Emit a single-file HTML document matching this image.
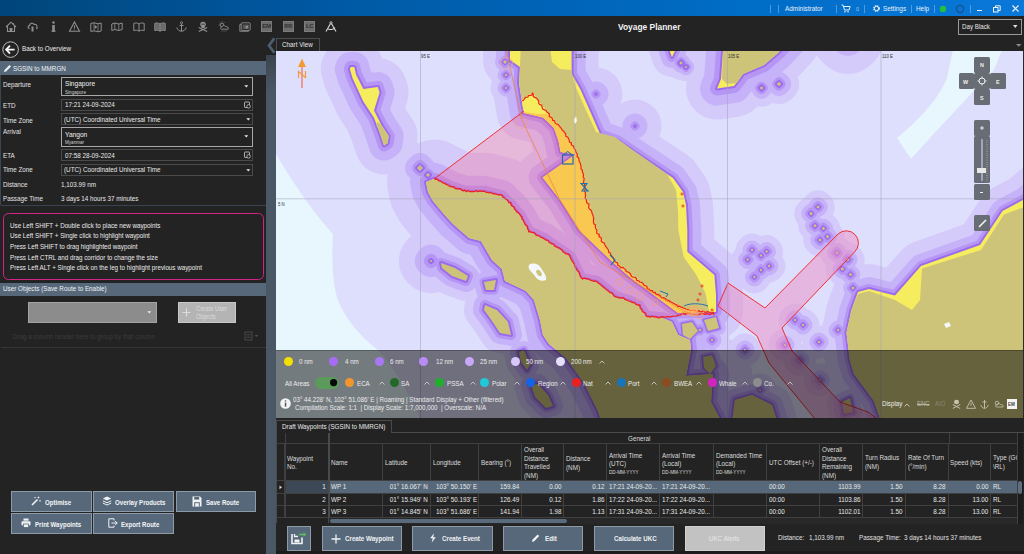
<!DOCTYPE html>
<html><head><meta charset="utf-8"><style>*{box-sizing:border-box;margin:0;padding:0}
html,body{width:1024px;height:554px;overflow:hidden;background:#232323;font-family:"Liberation Sans",sans-serif;color:#e8e8e8}
.a{position:absolute}
.t{position:absolute;white-space:nowrap;line-height:1;color:#e6e6e6}
svg{position:absolute;overflow:visible}
</style></head><body>
<div class="a" style="left:0px;top:0px;width:1024px;height:16px;background:linear-gradient(90deg,#00467a 0%,#00559c 25%,#0062b4 50%,#006ec8 75%,#0a78d8 100%);"></div>
<div class="a" style="left:770px;top:5px;width:1px;height:8px;background:rgba(140,190,240,0.55);"></div>
<div class="a" style="left:778px;top:5px;width:1px;height:8px;background:rgba(140,190,240,0.55);"></div>
<div class="a" style="left:836px;top:5px;width:1px;height:8px;background:rgba(140,190,240,0.55);"></div>
<div class="a" style="left:864px;top:5px;width:1px;height:8px;background:rgba(140,190,240,0.55);"></div>
<div class="a" style="left:911px;top:5px;width:1px;height:8px;background:rgba(140,190,240,0.55);"></div>
<div class="a" style="left:934px;top:5px;width:1px;height:8px;background:rgba(140,190,240,0.55);"></div>
<div class="a" style="left:970px;top:5px;width:1px;height:8px;background:rgba(140,190,240,0.55);"></div>
<div class="t" style="left:784.5px;top:4.94px;font-size:7.04px;transform:scaleX(0.91);transform-origin:0 0;color:#e8f0fa;">Administrator</div>
<svg style="left:841px;top:4px" width="10" height="9" viewBox="0 0 10 9"><path d="M0.5 1h1.5l1.5 5h4.5l1.2-3.5H2.6" fill="none" stroke="#e8f0fa" stroke-width="1"/><circle cx="4" cy="7.8" r="0.8" fill="#e8f0fa"/><circle cx="7" cy="7.8" r="0.8" fill="#e8f0fa"/></svg>
<div class="t" style="left:856.0px;top:5.78px;font-size:6.05px;transform:scaleX(0.91);transform-origin:0 0;color:#a8c8ea;">0</div>
<svg style="left:872px;top:4px" width="9" height="9" viewBox="0 0 9 9"><circle cx="4.5" cy="4.5" r="2.6" fill="none" stroke="#e8f0fa" stroke-width="1.6" stroke-dasharray="1.2 0.9"/><circle cx="4.5" cy="4.5" r="2.2" fill="none" stroke="#e8f0fa" stroke-width="1"/></svg>
<div class="t" style="left:883.0px;top:4.94px;font-size:7.04px;transform:scaleX(0.91);transform-origin:0 0;color:#e8f0fa;">Settings</div>
<div class="t" style="left:915.8px;top:4.94px;font-size:7.04px;transform:scaleX(0.91);transform-origin:0 0;color:#e8f0fa;">Help</div>
<svg style="left:939px;top:4.5px" width="8" height="8"><circle cx="4" cy="4" r="3.2" fill="#22c040"/></svg>
<svg style="left:955px;top:4px" width="10" height="10"><circle cx="5" cy="5" r="3.6" fill="none" stroke="#1a4f8c" stroke-width="1.2"/></svg>
<div class="a" style="left:977px;top:10px;width:5px;height:1.2px;background:#f0f4fa;"></div>
<svg style="left:993px;top:5px" width="8" height="8" viewBox="0 0 8 8"><rect x="0.5" y="2.5" width="4.5" height="4.5" fill="none" stroke="#f0f4fa" stroke-width="1"/><path d="M2.5 2.5V0.8h4.7v4.7H5" fill="none" stroke="#f0f4fa" stroke-width="1"/></svg>
<svg style="left:1012px;top:5px" width="7" height="7" viewBox="0 0 7 7"><path d="M0.5 0.5L6.5 6.5M6.5 0.5L0.5 6.5" stroke="#f0f4fa" stroke-width="1.2"/></svg>
<div class="t" style="left:617.8px;top:23.37px;font-size:9.24px;transform:scaleX(0.91);transform-origin:0 0;color:#f2f2f2;font-weight:bold;">Voyage Planner</div>
<div class="a" style="left:958px;top:18.5px;width:64px;height:16.5px;border:1px solid #9a9a9a;background:#232323"></div>
<div class="t" style="left:962.0px;top:24.12px;font-size:6.82px;transform:scaleX(0.91);transform-origin:0 0;color:#e8e8e8;">Day Black</div>
<svg style="left:1013px;top:25px" width="5" height="4"><path d="M0 0h4.5L2.25 3z" fill="#e0e0e0"/></svg>
<svg style="left:1015.5px;top:43.5px" width="6" height="4"><path d="M0 0h5.5L2.75 2.8z" fill="#8a8a8a"/></svg>
<svg style="left:5px;top:21px" width="12" height="11" viewBox="0 0 12 11"><path d="M1 6L6 1.2L11 6M2.5 4.8V10.5h7V4.8" fill="none" stroke="#8f8f8f" stroke-width="1.1"/><rect x="4.6" y="7" width="2.8" height="3.5" fill="#8f8f8f"/><path d="M8.5 2.2v1.6" stroke="#8f8f8f" stroke-width="1"/></svg>
<svg style="left:27px;top:22px" width="11" height="10" viewBox="0 0 11 10"><path d="M2.6 6.6C0.6 6.6 0.6 3.6 2.6 3.6C2.8 1.2 5.8 0.4 7 2.4C9 1.8 10.4 3.4 9.8 5C10.8 5.6 10.2 6.6 9.2 6.6" fill="none" stroke="#8f8f8f" stroke-width="1.1"/><path d="M5.5 9.5V4.5" stroke="#8f8f8f" stroke-width="2"/></svg>
<svg style="left:51px;top:21px" width="5" height="11" viewBox="0 0 5 11"><circle cx="2.5" cy="1.5" r="1.2" fill="#8f8f8f"/><rect x="1.2" y="4" width="2.6" height="6.5" fill="#8f8f8f"/><rect x="0.5" y="9.6" width="4" height="1.2" fill="#8f8f8f"/></svg>
<svg style="left:69px;top:21px" width="11" height="11" viewBox="0 0 11 11"><path d="M5.5 1L10.5 10.2H0.5Z" fill="none" stroke="#8f8f8f" stroke-width="1.1"/><path d="M5.5 4.5v3" stroke="#8f8f8f" stroke-width="1"/><circle cx="5.5" cy="8.8" r="0.5" fill="#8f8f8f"/></svg>
<svg style="left:90px;top:22px" width="12" height="10" viewBox="0 0 12 10"><path d="M0.8 1.5L4 0.8L8 1.8L11.2 1V9L8 9.8L4 8.8L0.8 9.5Z" fill="none" stroke="#8f8f8f" stroke-width="1"/><path d="M4 0.8V8.8M8 1.8V9.8" stroke="#8f8f8f" stroke-width="0.7"/><path d="M4.6 3L7.4 5L4.6 7Z" fill="#8f8f8f"/></svg>
<svg style="left:111px;top:22px" width="12" height="9" viewBox="0 0 12 9"><path d="M0.8 2L3.8 1L7.8 2L11.2 1V7.5L7.8 8.5L3.8 7.5L0.8 8.5Z" fill="none" stroke="#8f8f8f" stroke-width="1"/><path d="M3.8 1V7.5M7.8 2V8.5" stroke="#8f8f8f" stroke-width="0.8"/></svg>
<svg style="left:133px;top:22px" width="12" height="10" viewBox="0 0 12 10"><path d="M6 2C4.5 0.8 2.5 0.8 0.8 1.4V8.6C2.5 8 4.5 8 6 9.2C7.5 8 9.5 8 11.2 8.6V1.4C9.5 0.8 7.5 0.8 6 2ZM6 2V9.2" fill="none" stroke="#8f8f8f" stroke-width="1"/></svg>
<svg style="left:154px;top:22px" width="12" height="10" viewBox="0 0 12 10"><path d="M6 2C4.5 0.8 2.5 0.8 0.8 1.4V8.6C2.5 8 4.5 8 6 9.2C7.5 8 9.5 8 11.2 8.6V1.4C9.5 0.8 7.5 0.8 6 2ZM6 2V9.2" fill="#5a5a5a" stroke="#8f8f8f" stroke-width="1"/><path d="M2 3.2h3M2 5h3M2 6.8h3M7 3.2h3M7 5h3M7 6.8h3" stroke="#8f8f8f" stroke-width="0.6"/></svg>
<svg style="left:176px;top:21px" width="11" height="11" viewBox="0 0 11 11"><circle cx="5.5" cy="1.8" r="1.1" fill="none" stroke="#8f8f8f" stroke-width="0.9"/><path d="M5.5 3V10.2M3.5 4.5H7.5M0.8 6.5C1.5 9 3.5 10.2 5.5 10.2C7.5 10.2 9.5 9 10.2 6.5" fill="none" stroke="#8f8f8f" stroke-width="1"/></svg>
<svg style="left:198px;top:21px" width="10" height="11" viewBox="0 0 10 11"><ellipse cx="5" cy="3.3" rx="2.8" ry="2.6" fill="#8f8f8f"/><rect x="3.4" y="5" width="3.2" height="2" fill="#8f8f8f"/><circle cx="4" cy="3.2" r="0.7" fill="#2a2a2a"/><circle cx="6" cy="3.2" r="0.7" fill="#2a2a2a"/><path d="M0.8 6.5L9.2 10.5M9.2 6.5L0.8 10.5" stroke="#8f8f8f" stroke-width="1.1"/></svg>
<svg style="left:218px;top:21px" width="12" height="11" viewBox="0 0 12 11"><circle cx="4" cy="4" r="1.8" fill="none" stroke="#8f8f8f" stroke-width="0.9"/><path d="M4 0.4v1M0.6 4h1M1.6 1.6l0.7 0.7M6.4 1.6l-0.7 0.7" stroke="#8f8f8f" stroke-width="0.8"/><path d="M3.5 8.2C2.2 8.2 2.2 6.2 3.6 6.2C4 4.2 7 4 7.6 5.6C9.4 5.2 10.8 6.4 10.2 8.2Z" fill="#232323" stroke="#8f8f8f" stroke-width="0.9"/><path d="M4 9.5v1M6 9.5v1M8 9.5v1" stroke="#8f8f8f" stroke-width="0.7"/></svg>
<svg style="left:239px;top:22px" width="12" height="10" viewBox="0 0 12 10"><rect x="2.2" y="0.8" width="9" height="7.6" rx="0.8" fill="none" stroke="#8f8f8f" stroke-width="0.9"/><path d="M2.2 2.5H0.8V9.3H9.5V8.4" fill="none" stroke="#8f8f8f" stroke-width="0.9"/><rect x="3.6" y="2.4" width="6.2" height="4.6" fill="#555"/><rect x="6.6" y="3.8" width="2.6" height="2.6" fill="#8f8f8f"/></svg>
<div class="a" style="left:261px;top:21px;width:11px;height:11px;background:#6c6c6c;border:0.5px solid #7c7c7c"></div>
<div class="t" style="left:261px;top:23.2px;width:11px;text-align:center;font-size:6.2px;font-weight:bold;color:#303030;letter-spacing:-0.5px">EM</div>
<div class="a" style="left:282.6px;top:21px;width:11px;height:11px;background:#6c6c6c;border:0.5px solid #7c7c7c"></div>
<div class="t" style="left:282.6px;top:24px;width:11px;text-align:center;font-size:5px;font-weight:bold;color:#303030;letter-spacing:-0.5px">R45</div>
<div class="a" style="left:304px;top:21px;width:11px;height:11px;background:#6c6c6c;border:0.5px solid #7c7c7c"></div>
<div class="t" style="left:304px;top:23.2px;width:11px;text-align:center;font-size:6.2px;font-weight:bold;color:#303030;letter-spacing:-0.5px">LC</div>
<svg style="left:325px;top:21px" width="12" height="11" viewBox="0 0 12 11"><circle cx="6" cy="1.8" r="1.1" fill="none" stroke="#d8d8d8" stroke-width="0.9"/><path d="M5.4 2.8L1 10.6M6.6 2.8L11 10.6M2.2 7.6C4.5 9 8 8.8 10 6.6" fill="none" stroke="#d8d8d8" stroke-width="1.1"/></svg>
<svg style="left:2px;top:41px" width="18" height="18" viewBox="0 0 18 18"><circle cx="8.6" cy="8.6" r="7.8" fill="none" stroke="#cfcfcf" stroke-width="0.9"/><path d="M4.4 8.6H12.6M8 4.6L4.2 8.6L8 12.6" fill="none" stroke="#f4f4f4" stroke-width="1.9"/></svg>
<div class="t" style="left:21.5px;top:45.93px;font-size:6.93px;transform:scaleX(0.91);transform-origin:0 0;color:#ececec;">Back to Overview</div>
<div class="a" style="left:0px;top:61px;width:267px;height:14px;background:#56687a;"></div>
<svg style="left:3px;top:64px" width="9" height="9" viewBox="0 0 9 9"><path d="M1 8L1.5 6L6.5 1L8 2.5L3 7.5Z" fill="#eef2f6"/></svg>
<div class="t" style="left:13.0px;top:65.83px;font-size:6.93px;transform:scaleX(0.91);transform-origin:0 0;color:#eef2f6;">SGSIN to MMRGN</div>
<div class="a" style="left:0px;top:75px;width:1.2px;height:130px;background:#3c4650;"></div>
<div class="t" style="left:3.0px;top:81.63px;font-size:6.93px;transform:scaleX(0.91);transform-origin:0 0;color:#e4e4e4;">Departure</div>
<div class="t" style="left:3.0px;top:102.63px;font-size:6.93px;transform:scaleX(0.91);transform-origin:0 0;color:#e4e4e4;">ETD</div>
<div class="t" style="left:3.0px;top:117.63px;font-size:6.93px;transform:scaleX(0.91);transform-origin:0 0;color:#e4e4e4;">Time Zone</div>
<div class="t" style="left:3.0px;top:128.63px;font-size:6.93px;transform:scaleX(0.91);transform-origin:0 0;color:#e4e4e4;">Arrival</div>
<div class="t" style="left:3.0px;top:152.63px;font-size:6.93px;transform:scaleX(0.91);transform-origin:0 0;color:#e4e4e4;">ETA</div>
<div class="t" style="left:3.0px;top:167.43px;font-size:6.93px;transform:scaleX(0.91);transform-origin:0 0;color:#e4e4e4;">Time Zone</div>
<div class="t" style="left:3.0px;top:181.63px;font-size:6.93px;transform:scaleX(0.91);transform-origin:0 0;color:#e4e4e4;">Distance</div>
<div class="t" style="left:3.0px;top:195.63px;font-size:6.93px;transform:scaleX(0.91);transform-origin:0 0;color:#e4e4e4;">Passage Time</div>
<div class="a" style="left:61px;top:77px;width:192px;height:19px;border:1px solid #a8a8a8;background:#232323"></div>
<div class="t" style="left:65.0px;top:80.35px;font-size:7.26px;transform:scaleX(0.91);transform-origin:0 0;color:#f0f0f0;">Singapore</div>
<div class="t" style="left:65.0px;top:90.01px;font-size:5.06px;transform:scaleX(0.91);transform-origin:0 0;color:#d0d0d0;">Singapore</div>
<svg style="left:244px;top:85px" width="5" height="3"><path d="M0.3 0.3h4L2.3 2.6z" fill="#e8e8e8"/></svg>
<div class="a" style="left:61px;top:98.5px;width:192px;height:12px;border:1px solid #4a4a4a;background:#232323"></div>
<div class="t" style="left:64.5px;top:101.63px;font-size:6.93px;transform:scaleX(0.91);transform-origin:0 0;color:#e8e8e8;">17:21 24-09-2024</div>
<svg style="left:244px;top:100.5px" width="7" height="8" viewBox="0 0 7 8"><rect x="0.5" y="1" width="5" height="5.5" rx="0.6" fill="none" stroke="#cfcfcf" stroke-width="0.8"/><circle cx="4.6" cy="5.4" r="1.8" fill="#232323" stroke="#cfcfcf" stroke-width="0.7"/></svg>
<div class="a" style="left:61px;top:112.5px;width:192px;height:12.5px;border:1px solid #4a4a4a;background:#232323"></div>
<div class="t" style="left:63.5px;top:116.63px;font-size:6.93px;transform:scaleX(0.91);transform-origin:0 0;color:#e8e8e8;">(UTC) Coordinated Universal Time</div>
<svg style="left:245.5px;top:117.5px" width="5" height="3"><path d="M0.3 0.3h4L2.3 2.6z" fill="#e8e8e8"/></svg>
<div class="a" style="left:61px;top:127px;width:192px;height:19.5px;border:1px solid #a8a8a8;background:#232323"></div>
<div class="t" style="left:65.0px;top:130.85px;font-size:7.26px;transform:scaleX(0.91);transform-origin:0 0;color:#f0f0f0;">Yangon</div>
<div class="t" style="left:65.0px;top:140.01px;font-size:5.06px;transform:scaleX(0.91);transform-origin:0 0;color:#d0d0d0;">Myanmar</div>
<svg style="left:244px;top:135px" width="5" height="3"><path d="M0.3 0.3h4L2.3 2.6z" fill="#e8e8e8"/></svg>
<div class="a" style="left:61px;top:149px;width:192px;height:12px;border:1px solid #4a4a4a;background:#232323"></div>
<div class="t" style="left:64.5px;top:152.63px;font-size:6.93px;transform:scaleX(0.91);transform-origin:0 0;color:#e8e8e8;">07:58 28-09-2024</div>
<svg style="left:244px;top:151px" width="7" height="8" viewBox="0 0 7 8"><rect x="0.5" y="1" width="5" height="5.5" rx="0.6" fill="none" stroke="#cfcfcf" stroke-width="0.8"/><circle cx="4.6" cy="5.4" r="1.8" fill="#232323" stroke="#cfcfcf" stroke-width="0.7"/></svg>
<div class="a" style="left:61px;top:163.5px;width:192px;height:12.5px;border:1px solid #4a4a4a;background:#232323"></div>
<div class="t" style="left:63.5px;top:167.43px;font-size:6.93px;transform:scaleX(0.91);transform-origin:0 0;color:#e8e8e8;">(UTC) Coordinated Universal Time</div>
<svg style="left:245.5px;top:168.5px" width="5" height="3"><path d="M0.3 0.3h4L2.3 2.6z" fill="#e8e8e8"/></svg>
<div class="t" style="left:61.0px;top:181.63px;font-size:6.93px;transform:scaleX(0.91);transform-origin:0 0;color:#e8e8e8;">1,103.99 nm</div>
<div class="t" style="left:60.6px;top:195.63px;font-size:6.93px;transform:scaleX(0.91);transform-origin:0 0;color:#e8e8e8;">3 days 14 hours 37 minutes</div>
<div class="a" style="left:1px;top:204.8px;width:266px;height:1.2px;background:#3a4450;"></div>
<div class="a" style="left:3px;top:213px;width:261px;height:66.5px;border:1.3px solid #d02488;border-radius:5.5px"></div>
<div class="t" style="left:10.0px;top:222.77px;font-size:6.88px;transform:scaleX(0.91);transform-origin:0 0;color:#ececec;">Use Left SHIFT + Double click to place new waypoints</div>
<div class="t" style="left:10.0px;top:233.42px;font-size:6.88px;transform:scaleX(0.91);transform-origin:0 0;color:#ececec;">Use Left SHIFT + Single click to highlight waypoint</div>
<div class="t" style="left:10.0px;top:244.07px;font-size:6.88px;transform:scaleX(0.91);transform-origin:0 0;color:#ececec;">Press Left SHIFT to drag highlighted waypoint</div>
<div class="t" style="left:10.0px;top:254.72px;font-size:6.88px;transform:scaleX(0.91);transform-origin:0 0;color:#ececec;">Press Left CTRL and drag corridor to change the size</div>
<div class="t" style="left:10.0px;top:265.37px;font-size:6.88px;transform:scaleX(0.91);transform-origin:0 0;color:#ececec;">Press Left ALT + Single click on the leg to highlight previous waypoint</div>
<div class="a" style="left:0px;top:282.5px;width:267px;height:13px;background:#56687a;"></div>
<div class="t" style="left:3.0px;top:286.23px;font-size:6.93px;transform:scaleX(0.91);transform-origin:0 0;color:#eef2f6;">User Objects (Save Route to Enable)</div>
<div class="a" style="left:28px;top:302px;width:128.5px;height:21px;background:#8c8c8c;border:1px solid #a4a4a4"></div>
<svg style="left:147px;top:311px" width="5" height="3"><path d="M0.3 0.3h4L2.3 2.6z" fill="#eaeaea"/></svg>
<div class="a" style="left:177.5px;top:302px;width:58.5px;height:21px;background:#b4b4b4;border:1px solid #c8c8c8"></div>
<svg style="left:182px;top:307.5px" width="9" height="9"><path d="M4.5 0.5V8.5M0.5 4.5H8.5" stroke="#dcdcdc" stroke-width="1.1"/></svg>
<div class="t" style="left:196.0px;top:305.60px;font-size:6.38px;transform:scaleX(0.91);transform-origin:0 0;color:#dadada;">Create User</div>
<div class="t" style="left:196.0px;top:313.50px;font-size:6.38px;transform:scaleX(0.91);transform-origin:0 0;color:#dadada;">Objects</div>
<div class="t" style="left:13.0px;top:334.32px;font-size:6.82px;transform:scaleX(0.91);transform-origin:0 0;color:#3c3c3c;">Drag a column header here to group by that column</div>
<svg style="left:244px;top:331px" width="16" height="10"><rect x="1" y="1" width="7" height="8" fill="none" stroke="#4e4e4e" stroke-width="0.9"/><path d="M2.5 3.5h4M2.5 5h4M2.5 6.5h4" stroke="#4e4e4e" stroke-width="0.6"/><path d="M10.5 4h4L12.5 6z" fill="#4e4e4e"/></svg>
<div class="a" style="left:1px;top:347px;width:266px;height:0.8px;background:#363636;"></div>
<div class="a" style="left:11px;top:491px;width:80.5px;height:21px;background:#57687a;border:1px solid #8d9aa8"></div>
<svg style="left:31px;top:496px" width="10" height="10" viewBox="0 0 10 10"><path d="M1 9L6.5 3.5" stroke="#f0f2f4" stroke-width="1.6"/><path d="M7.5 0.5v2M6.5 1.5h2M9 4v1.6M8.2 4.8h1.6M4 1v1.2M3.4 1.6h1.2" stroke="#f0f2f4" stroke-width="0.7"/></svg>
<div class="t" style="left:44.5px;top:500.02px;font-size:6.71px;transform:scaleX(0.91);transform-origin:0 0;color:#f4f6f8;font-weight:bold;">Optimise</div>
<div class="a" style="left:93px;top:491px;width:80.5px;height:21px;background:#57687a;border:1px solid #8d9aa8"></div>
<svg style="left:102px;top:496px" width="10" height="10" viewBox="0 0 10 10"><path d="M5 0.6L9.2 2.6L5 4.6L0.8 2.6Z" fill="#f0f2f4"/><path d="M0.8 4.8L5 6.8L9.2 4.8M0.8 7L5 9L9.2 7" fill="none" stroke="#f0f2f4" stroke-width="1"/></svg>
<div class="t" style="left:115.0px;top:500.02px;font-size:6.71px;transform:scaleX(0.91);transform-origin:0 0;color:#f4f6f8;font-weight:bold;">Overlay Products</div>
<div class="a" style="left:175.5px;top:491px;width:80.5px;height:21px;background:#57687a;border:1px solid #8d9aa8"></div>
<svg style="left:192px;top:495.5px" width="10" height="11" viewBox="0 0 10 11"><path d="M0.5 0.5H8L9.5 2V10.5H0.5Z" fill="#f0f2f4"/><rect x="2.2" y="1" width="5" height="2.6" fill="#57687a"/><rect x="2.2" y="6.2" width="5.6" height="4.3" fill="#57687a"/><rect x="3.2" y="7.2" width="3.6" height="3.3" fill="#f0f2f4"/></svg>
<div class="t" style="left:205.5px;top:500.02px;font-size:6.71px;transform:scaleX(0.91);transform-origin:0 0;color:#f4f6f8;font-weight:bold;">Save Route</div>
<div class="a" style="left:11px;top:513px;width:80.5px;height:20.5px;background:#57687a;border:1px solid #8d9aa8"></div>
<svg style="left:21px;top:518px" width="10" height="10" viewBox="0 0 10 10"><rect x="2.5" y="0.5" width="5" height="2.2" fill="#f0f2f4"/><rect x="0.5" y="3.2" width="9" height="4.2" rx="0.8" fill="#f0f2f4"/><rect x="2.5" y="6" width="5" height="3.5" fill="#f0f2f4" stroke="#57687a" stroke-width="0.8"/></svg>
<div class="t" style="left:34.5px;top:522.02px;font-size:6.71px;transform:scaleX(0.91);transform-origin:0 0;color:#f4f6f8;font-weight:bold;">Print Waypoints</div>
<div class="a" style="left:93px;top:513px;width:80.5px;height:20.5px;background:#57687a;border:1px solid #8d9aa8"></div>
<svg style="left:108px;top:518px" width="10" height="10" viewBox="0 0 10 10"><path d="M6 2.5V0.8H0.8V9.2H6V7.5" fill="none" stroke="#f0f2f4" stroke-width="1"/><path d="M3.5 5H9.2M7.2 3L9.2 5L7.2 7" fill="none" stroke="#f0f2f4" stroke-width="1"/></svg>
<div class="t" style="left:120.8px;top:522.02px;font-size:6.71px;transform:scaleX(0.91);transform-origin:0 0;color:#f4f6f8;font-weight:bold;">Export Route</div>
<div class="a" style="left:266px;top:54.5px;width:9.5px;height:500px;background:linear-gradient(180deg,#3a434d 0px,#46525e 25px,#4a5866 40px,#4a5866 100%);"></div>
<svg style="left:266.5px;top:37px" width="9" height="17" viewBox="0 0 9 17"><path d="M7.3 1.2L2 8.5L7.3 15.8" fill="none" stroke="#4a5e70" stroke-width="2.8"/></svg>
<div class="a" style="left:276px;top:38px;width:43.5px;height:13px;border:1px solid #4c4c4c;border-bottom:none;background:#232323"></div>
<div class="t" style="left:282.0px;top:42.23px;font-size:6.93px;transform:scaleX(0.91);transform-origin:0 0;color:#e8e8e8;">Chart View</div>
<svg style="left:276px;top:51px" width="747" height="367" viewBox="276 51 747 367"><defs><clipPath id="mc"><rect x="276" y="51" width="747" height="367"/></clipPath></defs><g clip-path="url(#mc)">
<rect x="270" y="45" width="760" height="380" fill="#dedffd"/>
<path d="M270 150 L276 154 C300 195 322 222 333 234 C331 262 333 290 340 305 C348 322 362 338 378 350 C395 368 410 395 423 425 L270 425Z" fill="#e8f6fe"/>
<path d="M954 45 L947 78 C940 95 925 115 897 138 L911 159 C935 132 965 100 994 70 L1004 45Z" fill="#e8f6fe"/>
<path d="M350.7 67 L354.3 67 L356 74.5 L363.3 89 L377.8 87 L379.6 92.5 L374 110.6 L381.4 125 L388.6 136 L387.7 143 L384 145.5 L379.6 132.2 L374 117.8 L363.3 101.5 L352.5 78 L349.8 69Z" fill="#d4cbfa" stroke="#d4cbfa" stroke-width="58" stroke-linejoin="round"/>
<path d="M519 40 L574 40 L571.6 51 L571.6 74 L580 88.5 L589 108.8 L600.4 134.8 L617.8 141 L634 152 L655 166 L673 178 L683 192 L686 205 L687.3 230 L687.3 251.7 L714.4 275 L716 295 L716 312 L678 313 L629.6 277 L613 262.5 L579 230 L561 201 L542.6 177.6 L575.8 154.3 L560.6 152 L558.5 141 L554 128 L543 117.5 L523.8 113 L521.7 100 L519 83 L520 67 L510 60 L510 40Z" fill="#d4cbfa" stroke="#d4cbfa" stroke-width="54" stroke-linejoin="round"/>
<path d="M434.3 178.7 L451.7 187.3 L464.7 191.7 L484 191.7 L501.5 196 L511 205 L520 216 L528.7 231.8 L544.8 239.3 L560 250 L570 257 L581 278.7 L597 282 L615 296.8 L629.6 301.3 L638.6 305.8 L645.8 316.6 L663.9 318.5 L672 322 L678 335 L690 340 L691 350 L686 376 L713 374 L711 402 L726 430 L604 430 L598 411 L584 383 L566 358 L549 344 L543 335 L540 320 L534 300 L526 291 L520 288 L505 281 L502 269 L492 260 L481 241 L469 238 L453 224 L443 213 L433 201 L428 192 L426 182Z" fill="#d4cbfa" stroke="#d4cbfa" stroke-width="78" stroke-linejoin="round"/>
<path d="M723 40 L790 40 L778 53 L764 65 L743 74 L734 86 L717 88.5 L721 79 L723 51Z M429.8 261 L431 259.8 L432.2 261 L431 262.2Z" fill="#d4cbfa" stroke="#d4cbfa" stroke-width="62" stroke-linejoin="round"/>
<path d="M1035 190 L1024 199.5 L1002.5 211 L980 245 L921 266 L895 295.4 L869 289 L858 292 L851.4 310 L846.5 332.8 L849.8 360 L854 374 L874 401 L884 430 L1035 430Z" fill="#d4cbfa" stroke="#d4cbfa" stroke-width="50" stroke-linejoin="round"/>
<path d="M731 430 L735 400 L752 395 L772 405 L780 430Z M441 263 L455 268 L468 276 L466 281 L452 276 L442 268Z M485 305 L497 310 L508 322 L511 335 L500 333 L490 318 L484 310Z M666 40 L680 40 L672 57Z" fill="#d4cbfa" stroke="#d4cbfa" stroke-width="40" stroke-linejoin="round"/>
<path d="M484 282 L496 280 L494 290 L486 290Z M531 385 L538 384 L548 395 L553 406 L546 408 L535 397Z M759.7 88 L761.5 86.2 L763.3 88 L761.5 89.8Z" fill="#d4cbfa" stroke="#d4cbfa" stroke-width="34" stroke-linejoin="round"/>
<path d="M682 324 L692 322 L698 331 L690 339 L683 335Z" fill="#d4cbfa" stroke="#d4cbfa" stroke-width="22" stroke-linejoin="round"/>
<path d="M704 320 L716 317 L719 328 L708 331Z M684.8 67 L686 65.8 L687.2 67 L686 68.2Z" fill="#d4cbfa" stroke="#d4cbfa" stroke-width="26" stroke-linejoin="round"/>
<path d="M519 352 L524 350 L530 365 L527 370 L521 362Z M679.2 63 L681 61.2 L682.8 63 L681 64.8Z M842 402 L850 398 L853 412 L844 414Z M503 62 L505 60 L507 62 L505 64Z M746.2 259.6 L747.7 258.1 L749.2 259.6 L747.7 261.1Z M759.5 255.5 L761 254 L762.5 255.5 L761 257Z M765.1 251.5 L766.6 250 L768.1 251.5 L766.6 253Z M767.5 266 L769 264.5 L770.5 266 L769 267.5Z M752.9 277 L754.4 275.5 L755.9 277 L754.4 278.5Z M759.5 270 L761 268.5 L762.5 270 L761 271.5Z M750.5 250 L752 248.5 L753.5 250 L752 251.5Z M816.2 207 L818 205.2 L819.8 207 L818 208.8Z M809.2 213.6 L811 211.8 L812.8 213.6 L811 215.4Z M821.6 228.5 L823.4 226.7 L825.2 228.5 L823.4 230.3Z M825.7 236.6 L827.5 234.8 L829.3 236.6 L827.5 238.4Z M813.2 225.8 L815 224 L816.8 225.8 L815 227.6Z M846 259.6 L847.8 257.8 L849.6 259.6 L847.8 261.4Z M848.7 274.5 L850.5 272.7 L852.3 274.5 L850.5 276.3Z M840.6 269 L842.4 267.2 L844.2 269 L842.4 270.8Z M851.2 288 L853 286.2 L854.8 288 L853 289.8Z M835.2 252.8 L837 251 L838.8 252.8 L837 254.6Z M818.2 240 L820 238.2 L821.8 240 L820 241.8Z M793.5 320 L795 318.5 L796.5 320 L795 321.5Z M801.5 325 L803 323.5 L804.5 325 L803 326.5Z M817.5 342 L819 340.5 L820.5 342 L819 343.5Z M836.5 330 L838 328.5 L839.5 330 L838 331.5Z M848.5 328 L850 326.5 L851.5 328 L850 329.5Z M783.5 345 L785 343.5 L786.5 345 L785 346.5Z M798.5 360 L800 358.5 L801.5 360 L800 361.5Z M818.5 380 L820 378.5 L821.5 380 L820 381.5Z M758.5 390 L760 388.5 L761.5 390 L760 391.5Z M743.5 350 L745 348.5 L746.5 350 L745 351.5Z M698.5 330 L700 328.5 L701.5 330 L700 331.5Z M710.5 340 L712 338.5 L713.5 340 L712 341.5Z M670.5 330 L672 328.5 L673.5 330 L672 331.5Z M666.5 345 L668 343.5 L669.5 345 L668 346.5Z M688.5 352 L690 350.5 L691.5 352 L690 353.5Z" fill="#d4cbfa" stroke="#d4cbfa" stroke-width="30" stroke-linejoin="round"/>
<path d="M703 357 L712 355 L716 366 L710 374 L704 368Z" fill="#d4cbfa" stroke="#d4cbfa" stroke-width="24" stroke-linejoin="round"/>
<path d="M417 168 L420 165 L423 168 L420 171Z" fill="#d4cbfa" stroke="#d4cbfa" stroke-width="44" stroke-linejoin="round"/>
<path d="M426 175 L428 173 L430 175 L428 177Z M776.8 84 L779 81.8 L781.2 84 L779 86.2Z" fill="#d4cbfa" stroke="#d4cbfa" stroke-width="36" stroke-linejoin="round"/>
<path d="M504.5 75 L506 73.5 L507.5 75 L506 76.5Z M504.5 88 L506 86.5 L507.5 88 L506 89.5Z" fill="#d4cbfa" stroke="#d4cbfa" stroke-width="28" stroke-linejoin="round"/>
<path d="M595.5 94 L596 93.5 L596.5 94 L596 94.5Z M634.5 126 L635 125.5 L635.5 126 L635 126.5Z" fill="#d4cbfa" stroke="#d4cbfa" stroke-width="52" stroke-linejoin="round"/>
<path d="M845 38 L848 35 L851 38 L848 41Z" fill="#d4cbfa" stroke="#d4cbfa" stroke-width="66" stroke-linejoin="round"/>
<path d="M350.7 67 L354.3 67 L356 74.5 L363.3 89 L377.8 87 L379.6 92.5 L374 110.6 L381.4 125 L388.6 136 L387.7 143 L384 145.5 L379.6 132.2 L374 117.8 L363.3 101.5 L352.5 78 L349.8 69Z M429.8 261 L431 259.8 L432.2 261 L431 262.2Z M845 38 L848 35 L851 38 L848 41Z" fill="#c6b2f8" stroke="#c6b2f8" stroke-width="30" stroke-linejoin="round"/>
<path d="M519 40 L574 40 L571.6 51 L571.6 74 L580 88.5 L589 108.8 L600.4 134.8 L617.8 141 L634 152 L655 166 L673 178 L683 192 L686 205 L687.3 230 L687.3 251.7 L714.4 275 L716 295 L716 312 L678 313 L629.6 277 L613 262.5 L579 230 L561 201 L542.6 177.6 L575.8 154.3 L560.6 152 L558.5 141 L554 128 L543 117.5 L523.8 113 L521.7 100 L519 83 L520 67 L510 60 L510 40Z" fill="#c6b2f8" stroke="#c6b2f8" stroke-width="28" stroke-linejoin="round"/>
<path d="M434.3 178.7 L451.7 187.3 L464.7 191.7 L484 191.7 L501.5 196 L511 205 L520 216 L528.7 231.8 L544.8 239.3 L560 250 L570 257 L581 278.7 L597 282 L615 296.8 L629.6 301.3 L638.6 305.8 L645.8 316.6 L663.9 318.5 L672 322 L678 335 L690 340 L691 350 L686 376 L713 374 L711 402 L726 430 L604 430 L598 411 L584 383 L566 358 L549 344 L543 335 L540 320 L534 300 L526 291 L520 288 L505 281 L502 269 L492 260 L481 241 L469 238 L453 224 L443 213 L433 201 L428 192 L426 182Z" fill="#c6b2f8" stroke="#c6b2f8" stroke-width="32" stroke-linejoin="round"/>
<path d="M723 40 L790 40 L778 53 L764 65 L743 74 L734 86 L717 88.5 L721 79 L723 51Z" fill="#c6b2f8" stroke="#c6b2f8" stroke-width="34" stroke-linejoin="round"/>
<path d="M1035 190 L1024 199.5 L1002.5 211 L980 245 L921 266 L895 295.4 L869 289 L858 292 L851.4 310 L846.5 332.8 L849.8 360 L854 374 L874 401 L884 430 L1035 430Z M417 168 L420 165 L423 168 L420 171Z M595.5 94 L596 93.5 L596.5 94 L596 94.5Z M634.5 126 L635 125.5 L635.5 126 L635 126.5Z" fill="#c6b2f8" stroke="#c6b2f8" stroke-width="24" stroke-linejoin="round"/>
<path d="M731 430 L735 400 L752 395 L772 405 L780 430Z M441 263 L455 268 L468 276 L466 281 L452 276 L442 268Z M485 305 L497 310 L508 322 L511 335 L500 333 L490 318 L484 310Z M666 40 L680 40 L672 57Z" fill="#c6b2f8" stroke="#c6b2f8" stroke-width="22" stroke-linejoin="round"/>
<path d="M484 282 L496 280 L494 290 L486 290Z M531 385 L538 384 L548 395 L553 406 L546 408 L535 397Z M426 175 L428 173 L430 175 L428 177Z M776.8 84 L779 81.8 L781.2 84 L779 86.2Z" fill="#c6b2f8" stroke="#c6b2f8" stroke-width="20" stroke-linejoin="round"/>
<path d="M682 324 L692 322 L698 331 L690 339 L683 335Z" fill="#c6b2f8" stroke="#c6b2f8" stroke-width="12" stroke-linejoin="round"/>
<path d="M704 320 L716 317 L719 328 L708 331Z M703 357 L712 355 L716 366 L710 374 L704 368Z M684.8 67 L686 65.8 L687.2 67 L686 68.2Z M504.5 75 L506 73.5 L507.5 75 L506 76.5Z M504.5 88 L506 86.5 L507.5 88 L506 89.5Z" fill="#c6b2f8" stroke="#c6b2f8" stroke-width="14" stroke-linejoin="round"/>
<path d="M519 352 L524 350 L530 365 L527 370 L521 362Z M759.7 88 L761.5 86.2 L763.3 88 L761.5 89.8Z M842 402 L850 398 L853 412 L844 414Z" fill="#c6b2f8" stroke="#c6b2f8" stroke-width="18" stroke-linejoin="round"/>
<path d="M679.2 63 L681 61.2 L682.8 63 L681 64.8Z M503 62 L505 60 L507 62 L505 64Z M746.2 259.6 L747.7 258.1 L749.2 259.6 L747.7 261.1Z M759.5 255.5 L761 254 L762.5 255.5 L761 257Z M765.1 251.5 L766.6 250 L768.1 251.5 L766.6 253Z M767.5 266 L769 264.5 L770.5 266 L769 267.5Z M752.9 277 L754.4 275.5 L755.9 277 L754.4 278.5Z M759.5 270 L761 268.5 L762.5 270 L761 271.5Z M750.5 250 L752 248.5 L753.5 250 L752 251.5Z M816.2 207 L818 205.2 L819.8 207 L818 208.8Z M809.2 213.6 L811 211.8 L812.8 213.6 L811 215.4Z M821.6 228.5 L823.4 226.7 L825.2 228.5 L823.4 230.3Z M825.7 236.6 L827.5 234.8 L829.3 236.6 L827.5 238.4Z M813.2 225.8 L815 224 L816.8 225.8 L815 227.6Z M846 259.6 L847.8 257.8 L849.6 259.6 L847.8 261.4Z M848.7 274.5 L850.5 272.7 L852.3 274.5 L850.5 276.3Z M840.6 269 L842.4 267.2 L844.2 269 L842.4 270.8Z M851.2 288 L853 286.2 L854.8 288 L853 289.8Z M835.2 252.8 L837 251 L838.8 252.8 L837 254.6Z M818.2 240 L820 238.2 L821.8 240 L820 241.8Z M793.5 320 L795 318.5 L796.5 320 L795 321.5Z M801.5 325 L803 323.5 L804.5 325 L803 326.5Z M817.5 342 L819 340.5 L820.5 342 L819 343.5Z M836.5 330 L838 328.5 L839.5 330 L838 331.5Z M848.5 328 L850 326.5 L851.5 328 L850 329.5Z M783.5 345 L785 343.5 L786.5 345 L785 346.5Z M798.5 360 L800 358.5 L801.5 360 L800 361.5Z M818.5 380 L820 378.5 L821.5 380 L820 381.5Z M758.5 390 L760 388.5 L761.5 390 L760 391.5Z M743.5 350 L745 348.5 L746.5 350 L745 351.5Z M698.5 330 L700 328.5 L701.5 330 L700 331.5Z M710.5 340 L712 338.5 L713.5 340 L712 341.5Z M670.5 330 L672 328.5 L673.5 330 L672 331.5Z M666.5 345 L668 343.5 L669.5 345 L668 346.5Z M688.5 352 L690 350.5 L691.5 352 L690 353.5Z" fill="#c6b2f8" stroke="#c6b2f8" stroke-width="16" stroke-linejoin="round"/>
<path d="M350.7 67 L354.3 67 L356 74.5 L363.3 89 L377.8 87 L379.6 92.5 L374 110.6 L381.4 125 L388.6 136 L387.7 143 L384 145.5 L379.6 132.2 L374 117.8 L363.3 101.5 L352.5 78 L349.8 69Z M434.3 178.7 L451.7 187.3 L464.7 191.7 L484 191.7 L501.5 196 L511 205 L520 216 L528.7 231.8 L544.8 239.3 L560 250 L570 257 L581 278.7 L597 282 L615 296.8 L629.6 301.3 L638.6 305.8 L645.8 316.6 L663.9 318.5 L672 322 L678 335 L690 340 L691 350 L686 376 L713 374 L711 402 L726 430 L604 430 L598 411 L584 383 L566 358 L549 344 L543 335 L540 320 L534 300 L526 291 L520 288 L505 281 L502 269 L492 260 L481 241 L469 238 L453 224 L443 213 L433 201 L428 192 L426 182Z M429.8 261 L431 259.8 L432.2 261 L431 262.2Z" fill="#b596f4" stroke="#b596f4" stroke-width="12" stroke-linejoin="round"/>
<path d="M519 40 L574 40 L571.6 51 L571.6 74 L580 88.5 L589 108.8 L600.4 134.8 L617.8 141 L634 152 L655 166 L673 178 L683 192 L686 205 L687.3 230 L687.3 251.7 L714.4 275 L716 295 L716 312 L678 313 L629.6 277 L613 262.5 L579 230 L561 201 L542.6 177.6 L575.8 154.3 L560.6 152 L558.5 141 L554 128 L543 117.5 L523.8 113 L521.7 100 L519 83 L520 67 L510 60 L510 40Z" fill="#b596f4" stroke="#b596f4" stroke-width="11" stroke-linejoin="round"/>
<path d="M723 40 L790 40 L778 53 L764 65 L743 74 L734 86 L717 88.5 L721 79 L723 51Z" fill="#b596f4" stroke="#b596f4" stroke-width="14" stroke-linejoin="round"/>
<path d="M1035 190 L1024 199.5 L1002.5 211 L980 245 L921 266 L895 295.4 L869 289 L858 292 L851.4 310 L846.5 332.8 L849.8 360 L854 374 L874 401 L884 430 L1035 430Z M731 430 L735 400 L752 395 L772 405 L780 430Z M441 263 L455 268 L468 276 L466 281 L452 276 L442 268Z M485 305 L497 310 L508 322 L511 335 L500 333 L490 318 L484 310Z M417 168 L420 165 L423 168 L420 171Z M666 40 L680 40 L672 57Z" fill="#b596f4" stroke="#b596f4" stroke-width="10" stroke-linejoin="round"/>
<path d="M484 282 L496 280 L494 290 L486 290Z M531 385 L538 384 L548 395 L553 406 L546 408 L535 397Z M426 175 L428 173 L430 175 L428 177Z M759.7 88 L761.5 86.2 L763.3 88 L761.5 89.8Z M776.8 84 L779 81.8 L781.2 84 L779 86.2Z" fill="#b596f4" stroke="#b596f4" stroke-width="9" stroke-linejoin="round"/>
<path d="M682 324 L692 322 L698 331 L690 339 L683 335Z M704 320 L716 317 L719 328 L708 331Z" fill="#b596f4" stroke="#b596f4" stroke-width="6" stroke-linejoin="round"/>
<path d="M519 352 L524 350 L530 365 L527 370 L521 362Z M679.2 63 L681 61.2 L682.8 63 L681 64.8Z M842 402 L850 398 L853 412 L844 414Z M503 62 L505 60 L507 62 L505 64Z M595.5 94 L596 93.5 L596.5 94 L596 94.5Z M634.5 126 L635 125.5 L635.5 126 L635 126.5Z M845 38 L848 35 L851 38 L848 41Z M746.2 259.6 L747.7 258.1 L749.2 259.6 L747.7 261.1Z M759.5 255.5 L761 254 L762.5 255.5 L761 257Z M765.1 251.5 L766.6 250 L768.1 251.5 L766.6 253Z M767.5 266 L769 264.5 L770.5 266 L769 267.5Z M752.9 277 L754.4 275.5 L755.9 277 L754.4 278.5Z M759.5 270 L761 268.5 L762.5 270 L761 271.5Z M750.5 250 L752 248.5 L753.5 250 L752 251.5Z M816.2 207 L818 205.2 L819.8 207 L818 208.8Z M809.2 213.6 L811 211.8 L812.8 213.6 L811 215.4Z M821.6 228.5 L823.4 226.7 L825.2 228.5 L823.4 230.3Z M825.7 236.6 L827.5 234.8 L829.3 236.6 L827.5 238.4Z M813.2 225.8 L815 224 L816.8 225.8 L815 227.6Z M846 259.6 L847.8 257.8 L849.6 259.6 L847.8 261.4Z M848.7 274.5 L850.5 272.7 L852.3 274.5 L850.5 276.3Z M840.6 269 L842.4 267.2 L844.2 269 L842.4 270.8Z M851.2 288 L853 286.2 L854.8 288 L853 289.8Z M835.2 252.8 L837 251 L838.8 252.8 L837 254.6Z M818.2 240 L820 238.2 L821.8 240 L820 241.8Z M793.5 320 L795 318.5 L796.5 320 L795 321.5Z M801.5 325 L803 323.5 L804.5 325 L803 326.5Z M817.5 342 L819 340.5 L820.5 342 L819 343.5Z M836.5 330 L838 328.5 L839.5 330 L838 331.5Z M848.5 328 L850 326.5 L851.5 328 L850 329.5Z M783.5 345 L785 343.5 L786.5 345 L785 346.5Z M798.5 360 L800 358.5 L801.5 360 L800 361.5Z M818.5 380 L820 378.5 L821.5 380 L820 381.5Z M758.5 390 L760 388.5 L761.5 390 L760 391.5Z M743.5 350 L745 348.5 L746.5 350 L745 351.5Z M698.5 330 L700 328.5 L701.5 330 L700 331.5Z M710.5 340 L712 338.5 L713.5 340 L712 341.5Z M670.5 330 L672 328.5 L673.5 330 L672 331.5Z M666.5 345 L668 343.5 L669.5 345 L668 346.5Z M688.5 352 L690 350.5 L691.5 352 L690 353.5Z" fill="#b596f4" stroke="#b596f4" stroke-width="8" stroke-linejoin="round"/>
<path d="M703 357 L712 355 L716 366 L710 374 L704 368Z M684.8 67 L686 65.8 L687.2 67 L686 68.2Z M504.5 75 L506 73.5 L507.5 75 L506 76.5Z M504.5 88 L506 86.5 L507.5 88 L506 89.5Z" fill="#b596f4" stroke="#b596f4" stroke-width="7" stroke-linejoin="round"/>
<path d="M350.7 67 L354.3 67 L356 74.5 L363.3 89 L377.8 87 L379.6 92.5 L374 110.6 L381.4 125 L388.6 136 L387.7 143 L384 145.5 L379.6 132.2 L374 117.8 L363.3 101.5 L352.5 78 L349.8 69Z M519 40 L574 40 L571.6 51 L571.6 74 L580 88.5 L589 108.8 L600.4 134.8 L617.8 141 L634 152 L655 166 L673 178 L683 192 L686 205 L687.3 230 L687.3 251.7 L714.4 275 L716 295 L716 312 L678 313 L629.6 277 L613 262.5 L579 230 L561 201 L542.6 177.6 L575.8 154.3 L560.6 152 L558.5 141 L554 128 L543 117.5 L523.8 113 L521.7 100 L519 83 L520 67 L510 60 L510 40Z M434.3 178.7 L451.7 187.3 L464.7 191.7 L484 191.7 L501.5 196 L511 205 L520 216 L528.7 231.8 L544.8 239.3 L560 250 L570 257 L581 278.7 L597 282 L615 296.8 L629.6 301.3 L638.6 305.8 L645.8 316.6 L663.9 318.5 L672 322 L678 335 L690 340 L691 350 L686 376 L713 374 L711 402 L726 430 L604 430 L598 411 L584 383 L566 358 L549 344 L543 335 L540 320 L534 300 L526 291 L520 288 L505 281 L502 269 L492 260 L481 241 L469 238 L453 224 L443 213 L433 201 L428 192 L426 182Z M723 40 L790 40 L778 53 L764 65 L743 74 L734 86 L717 88.5 L721 79 L723 51Z M1035 190 L1024 199.5 L1002.5 211 L980 245 L921 266 L895 295.4 L869 289 L858 292 L851.4 310 L846.5 332.8 L849.8 360 L854 374 L874 401 L884 430 L1035 430Z M731 430 L735 400 L752 395 L772 405 L780 430Z M441 263 L455 268 L468 276 L466 281 L452 276 L442 268Z M484 282 L496 280 L494 290 L486 290Z M485 305 L497 310 L508 322 L511 335 L500 333 L490 318 L484 310Z M429.8 261 L431 259.8 L432.2 261 L431 262.2Z M531 385 L538 384 L548 395 L553 406 L546 408 L535 397Z M519 352 L524 350 L530 365 L527 370 L521 362Z M417 168 L420 165 L423 168 L420 171Z M426 175 L428 173 L430 175 L428 177Z M666 40 L680 40 L672 57Z M679.2 63 L681 61.2 L682.8 63 L681 64.8Z M684.8 67 L686 65.8 L687.2 67 L686 68.2Z M759.7 88 L761.5 86.2 L763.3 88 L761.5 89.8Z M776.8 84 L779 81.8 L781.2 84 L779 86.2Z M842 402 L850 398 L853 412 L844 414Z" fill="#9d6cec" stroke="#9d6cec" stroke-width="4" stroke-linejoin="round"/>
<path d="M682 324 L692 322 L698 331 L690 339 L683 335Z M704 320 L716 317 L719 328 L708 331Z M703 357 L712 355 L716 366 L710 374 L704 368Z M503 62 L505 60 L507 62 L505 64Z M504.5 75 L506 73.5 L507.5 75 L506 76.5Z M504.5 88 L506 86.5 L507.5 88 L506 89.5Z M595.5 94 L596 93.5 L596.5 94 L596 94.5Z M634.5 126 L635 125.5 L635.5 126 L635 126.5Z M845 38 L848 35 L851 38 L848 41Z M746.2 259.6 L747.7 258.1 L749.2 259.6 L747.7 261.1Z M759.5 255.5 L761 254 L762.5 255.5 L761 257Z M765.1 251.5 L766.6 250 L768.1 251.5 L766.6 253Z M767.5 266 L769 264.5 L770.5 266 L769 267.5Z M752.9 277 L754.4 275.5 L755.9 277 L754.4 278.5Z M759.5 270 L761 268.5 L762.5 270 L761 271.5Z M750.5 250 L752 248.5 L753.5 250 L752 251.5Z M816.2 207 L818 205.2 L819.8 207 L818 208.8Z M809.2 213.6 L811 211.8 L812.8 213.6 L811 215.4Z M821.6 228.5 L823.4 226.7 L825.2 228.5 L823.4 230.3Z M825.7 236.6 L827.5 234.8 L829.3 236.6 L827.5 238.4Z M813.2 225.8 L815 224 L816.8 225.8 L815 227.6Z M846 259.6 L847.8 257.8 L849.6 259.6 L847.8 261.4Z M848.7 274.5 L850.5 272.7 L852.3 274.5 L850.5 276.3Z M840.6 269 L842.4 267.2 L844.2 269 L842.4 270.8Z M851.2 288 L853 286.2 L854.8 288 L853 289.8Z M835.2 252.8 L837 251 L838.8 252.8 L837 254.6Z M818.2 240 L820 238.2 L821.8 240 L820 241.8Z M793.5 320 L795 318.5 L796.5 320 L795 321.5Z M801.5 325 L803 323.5 L804.5 325 L803 326.5Z M817.5 342 L819 340.5 L820.5 342 L819 343.5Z M836.5 330 L838 328.5 L839.5 330 L838 331.5Z M848.5 328 L850 326.5 L851.5 328 L850 329.5Z M783.5 345 L785 343.5 L786.5 345 L785 346.5Z M798.5 360 L800 358.5 L801.5 360 L800 361.5Z M818.5 380 L820 378.5 L821.5 380 L820 381.5Z M758.5 390 L760 388.5 L761.5 390 L760 391.5Z M743.5 350 L745 348.5 L746.5 350 L745 351.5Z M698.5 330 L700 328.5 L701.5 330 L700 331.5Z M710.5 340 L712 338.5 L713.5 340 L712 341.5Z M670.5 330 L672 328.5 L673.5 330 L672 331.5Z M666.5 345 L668 343.5 L669.5 345 L668 346.5Z M688.5 352 L690 350.5 L691.5 352 L690 353.5Z" fill="#9d6cec" stroke="#9d6cec" stroke-width="3" stroke-linejoin="round"/>
<path d="M350.7 67 L354.3 67 L356 74.5 L363.3 89 L377.8 87 L379.6 92.5 L374 110.6 L381.4 125 L388.6 136 L387.7 143 L384 145.5 L379.6 132.2 L374 117.8 L363.3 101.5 L352.5 78 L349.8 69Z M519 40 L574 40 L571.6 51 L571.6 74 L580 88.5 L589 108.8 L600.4 134.8 L617.8 141 L634 152 L655 166 L673 178 L683 192 L686 205 L687.3 230 L687.3 251.7 L714.4 275 L716 295 L716 312 L678 313 L629.6 277 L613 262.5 L579 230 L561 201 L542.6 177.6 L575.8 154.3 L560.6 152 L558.5 141 L554 128 L543 117.5 L523.8 113 L521.7 100 L519 83 L520 67 L510 60 L510 40Z M434.3 178.7 L451.7 187.3 L464.7 191.7 L484 191.7 L501.5 196 L511 205 L520 216 L528.7 231.8 L544.8 239.3 L560 250 L570 257 L581 278.7 L597 282 L615 296.8 L629.6 301.3 L638.6 305.8 L645.8 316.6 L663.9 318.5 L672 322 L678 335 L690 340 L691 350 L686 376 L713 374 L711 402 L726 430 L604 430 L598 411 L584 383 L566 358 L549 344 L543 335 L540 320 L534 300 L526 291 L520 288 L505 281 L502 269 L492 260 L481 241 L469 238 L453 224 L443 213 L433 201 L428 192 L426 182Z M723 40 L790 40 L778 53 L764 65 L743 74 L734 86 L717 88.5 L721 79 L723 51Z M1035 190 L1024 199.5 L1002.5 211 L980 245 L921 266 L895 295.4 L869 289 L858 292 L851.4 310 L846.5 332.8 L849.8 360 L854 374 L874 401 L884 430 L1035 430Z" fill="#f5ec5e"/>
<path d="M731 430 L735 400 L752 395 L772 405 L780 430Z M441 263 L455 268 L468 276 L466 281 L452 276 L442 268Z M484 282 L496 280 L494 290 L486 290Z M485 305 L497 310 L508 322 L511 335 L500 333 L490 318 L484 310Z M429.8 261 L431 259.8 L432.2 261 L431 262.2Z M682 324 L692 322 L698 331 L690 339 L683 335Z M704 320 L716 317 L719 328 L708 331Z M531 385 L538 384 L548 395 L553 406 L546 408 L535 397Z M519 352 L524 350 L530 365 L527 370 L521 362Z M703 357 L712 355 L716 366 L710 374 L704 368Z M417 168 L420 165 L423 168 L420 171Z M426 175 L428 173 L430 175 L428 177Z M666 40 L680 40 L672 57Z M679.2 63 L681 61.2 L682.8 63 L681 64.8Z M684.8 67 L686 65.8 L687.2 67 L686 68.2Z M759.7 88 L761.5 86.2 L763.3 88 L761.5 89.8Z M776.8 84 L779 81.8 L781.2 84 L779 86.2Z M842 402 L850 398 L853 412 L844 414Z M503 62 L505 60 L507 62 L505 64Z M504.5 75 L506 73.5 L507.5 75 L506 76.5Z M504.5 88 L506 86.5 L507.5 88 L506 89.5Z M595.5 94 L596 93.5 L596.5 94 L596 94.5Z M634.5 126 L635 125.5 L635.5 126 L635 126.5Z M845 38 L848 35 L851 38 L848 41Z M746.2 259.6 L747.7 258.1 L749.2 259.6 L747.7 261.1Z M759.5 255.5 L761 254 L762.5 255.5 L761 257Z M765.1 251.5 L766.6 250 L768.1 251.5 L766.6 253Z M767.5 266 L769 264.5 L770.5 266 L769 267.5Z M752.9 277 L754.4 275.5 L755.9 277 L754.4 278.5Z M759.5 270 L761 268.5 L762.5 270 L761 271.5Z M750.5 250 L752 248.5 L753.5 250 L752 251.5Z M816.2 207 L818 205.2 L819.8 207 L818 208.8Z M809.2 213.6 L811 211.8 L812.8 213.6 L811 215.4Z M821.6 228.5 L823.4 226.7 L825.2 228.5 L823.4 230.3Z M825.7 236.6 L827.5 234.8 L829.3 236.6 L827.5 238.4Z M813.2 225.8 L815 224 L816.8 225.8 L815 227.6Z M846 259.6 L847.8 257.8 L849.6 259.6 L847.8 261.4Z M848.7 274.5 L850.5 272.7 L852.3 274.5 L850.5 276.3Z M840.6 269 L842.4 267.2 L844.2 269 L842.4 270.8Z M851.2 288 L853 286.2 L854.8 288 L853 289.8Z M835.2 252.8 L837 251 L838.8 252.8 L837 254.6Z M818.2 240 L820 238.2 L821.8 240 L820 241.8Z M793.5 320 L795 318.5 L796.5 320 L795 321.5Z M801.5 325 L803 323.5 L804.5 325 L803 326.5Z M817.5 342 L819 340.5 L820.5 342 L819 343.5Z M836.5 330 L838 328.5 L839.5 330 L838 331.5Z M848.5 328 L850 326.5 L851.5 328 L850 329.5Z M783.5 345 L785 343.5 L786.5 345 L785 346.5Z M798.5 360 L800 358.5 L801.5 360 L800 361.5Z M818.5 380 L820 378.5 L821.5 380 L820 381.5Z M758.5 390 L760 388.5 L761.5 390 L760 391.5Z M743.5 350 L745 348.5 L746.5 350 L745 351.5Z M698.5 330 L700 328.5 L701.5 330 L700 331.5Z M710.5 340 L712 338.5 L713.5 340 L712 341.5Z M670.5 330 L672 328.5 L673.5 330 L672 331.5Z M666.5 345 L668 343.5 L669.5 345 L668 346.5Z M688.5 352 L690 350.5 L691.5 352 L690 353.5Z" fill="#cdc47a"/>
<path d="M521 40 L549 40 L552 62 L560 69 L571 70 L576 88 L585 108 L596 132 L615 137 L630 148 L650 162 L667 174 L676 190 L678 211 L678.3 230 L683.7 257 L696.4 275 L705.4 293 L709 311 L714 312 L687 309.4 L671 302 L651 289.6 L629.6 273 L615 260.7 L606 246 L597 230 L592.4 213.3 L586 196 L584.5 178 L580 160.8 L573.6 145.6 L565 132.6 L556 121.8 L543 106.7 L532.5 92.6 L521.7 100 L519 83 L520 67Z M434.3 178.7 L451.7 187.3 L464.7 191.7 L484 191.7 L501.5 196 L511 205 L520 216 L528.7 231.8 L544.8 239.3 L560 250 L570 257 L581 278.7 L597 282 L615 296.8 L629.6 301.3 L638.6 305.8 L645.8 316.6 L663.9 318.5 L672 322 L678 335 L690 340 L691 350 L686 376 L713 374 L711 402 L726 430 L604 430 L598 411 L584 383 L566 358 L549 344 L543 335 L540 320 L534 300 L526 291 L520 288 L505 281 L502 269 L492 260 L481 241 L469 238 L453 224 L443 213 L433 201 L428 192 L426 182Z M723 40 L788 40 L778 53 L764 65 L743 74 L737 83 L727 84 L722 79 L723 51Z M1035 206 L1024 207 L1004 214.5 L981 250 L922 268.5 L920 300 L912 310 L895 300 L869 291 L858 294 L851.4 310 L846.5 332.8 L849.8 360 L854 374 L874 401 L884 430 L1035 430Z M731 430 L735 400 L752 395 L772 405 L780 430Z M378 122 L381.4 125 L388.6 136 L387.7 143 L384 145.5 L379.6 132.2 L376 124Z" fill="#cdc47a"/>
<path d="M666 40 L680 40 L672 57Z" fill="#f5ec5e"/>
<path d="M434.3 178.7 L524 111 L523.8 113 L543 117.5 L554 128 L558.5 141 L560.6 152 L575.8 154.3 L542.6 177.6 L561 201 L579 230 L613 262.5 L629.6 277 L678 313 L714 312 L714.4 314.8 L682 314.8 L663.9 318.5 L645.8 316.6 L638.6 305.8 L629.6 301.3 L615 296.8 L597 282 L581 278.7 L570 257 L560 250 L544.8 239.3 L528.7 231.8 L520 216 L511 205 L501.5 196 L484 191.7 L464.7 191.7 L451.7 187.3 L434.3 178.7Z" fill="rgb(250,100,140)" fill-opacity="0.3"/>
<path d="M523.8 113 L543 117.5 L554 128 L558.5 141 L560.6 152 L575.8 154.3 L542.6 177.6 L561 201 L579 230 L613 262.5 L629.6 277 L678 313 L714 312 L687 309.4 L671 302 L651 289.6 L629.6 273 L615 260.7 L606 246 L597 230 L592.4 213.3 L586 196 L584.5 178 L580 160.8 L573.6 145.6 L565 132.6 L556 121.8 L543 106.7 L532.5 92.6 L521.7 100Z" fill="#f8c850"/>
<path d="M521.7 100 L532.5 92.6 L543 106.7 L549 113.5 L538 114 L524 112Z" fill="#f5ec5e"/>
<path d="M434.3 178.7 L524 111" stroke="#f0201c" stroke-width="0.9" fill="none"/>
<path d="M434.38 178.53 L435.77 179.38 L437.54 179.45 L438.65 180.84 L440.33 181.1 L441.66 182.07 L443 182.99 L444.66 183.3 L445.9 184.43 L447.5 184.85 L448.8 185.86 L450.26 186.57 L451.8 186.99 L453.72 186.68 L454.96 188.37 L456.6 188.87 L458.43 188.83 L460.34 188.52 L461.64 190.03 L463.17 190.88 L464.7 189.98 L466.31 191.7 L467.92 190.37 L469.52 191.55 L471.13 191.66 L472.74 191.68 L474.35 191.53 L475.96 190.5 L477.57 191.64 L479.18 191.09 L480.78 190.97 L482.39 191.45 L484.13 191.18 L485.59 192.08 L487.18 192.48 L488.79 192.8 L490.56 192.45 L492.03 193.33 L493.59 193.87 L495.28 193.84 L496.82 194.47 L498.36 195.06 L500.18 194.51 L502.1 195.36 L502.76 197.05 L504.28 197.82 L505.4 199.01 L507.2 199.5 L508.1 200.93 L508.73 202.64 L511 202.62 L511.02 204.98 L512.37 206.18 L514.05 207.1 L514.41 209.1 L515.83 210.23 L516.63 211.87 L518.37 212.74 L519.69 213.96 L520.52 215.71 L522 216.77 L521.74 218.79 L523.13 219.89 L523.72 221.44 L524.48 222.89 L525.07 224.44 L526.65 225.44 L527.73 226.72 L527.47 228.73 L528.6 229.98 L528.7 231.79 L530.54 231.68 L531.95 232.48 L533.84 232.24 L535.07 233.42 L536.08 235.08 L537.59 235.65 L539.29 235.84 L540.41 237.25 L542.03 237.59 L543.36 238.57 L544.81 239.28 L546.19 240.27 L548.18 240.38 L548.96 242.19 L550.39 243.1 L551.87 243.94 L553.88 244.02 L554.48 246.1 L556.06 246.78 L557.55 247.61 L559.43 247.88 L560.69 249.01 L562.2 249.9 L562.94 251.89 L564.46 252.75 L565.85 253.81 L567.95 253.85 L569.52 254.65 L570.04 256.98 L570.78 258.42 L571.55 259.85 L572.29 261.3 L573.31 262.6 L574.22 263.95 L574.51 265.62 L575.13 267.13 L576.15 268.43 L576.82 269.91 L577.85 271.21 L579.53 272.17 L579.57 273.97 L579.96 275.59 L580.88 276.94 L581.17 277.89 L582.6 279.02 L584.49 277.93 L586.02 278.62 L587.68 278.67 L589.23 279.23 L590.66 280.41 L592.26 280.73 L593.8 281.32 L595.55 280.96 L597 281.99 L598.29 283.05 L599.62 284.05 L600.89 285.13 L602.28 286.07 L603.43 287.28 L604.71 288.34 L606.03 289.37 L607.3 290.44 L608.72 291.33 L609.86 292.57 L612.02 292.57 L612.86 294.16 L613.74 295.71 L615.03 296.69 L616.69 297.09 L618.31 297.57 L619.87 298.27 L621.87 297.56 L623.63 297.6 L624.85 299.43 L626.48 299.9 L627.98 300.79 L629.61 301.28 L631.19 301.86 L632.66 302.69 L634.65 302.44 L635.62 304.26 L637.1 305.05 L639.95 304.9 L639.92 306.87 L640.43 308.48 L641.74 309.56 L642.2 311.2 L643.52 312.27 L645.43 312.94 L646.02 314.51 L645.89 315.73 L647.46 316.65 L649.12 316.7 L650.74 317.07 L652.49 316.22 L654.08 316.96 L655.79 316.55 L657.34 317.61 L658.97 317.89 L660.73 316.98 L662.44 316.59 L663.64 317.22 L665.31 317.02 L666.95 316.65 L668.64 316.53 L670.46 317.06 L672.03 316.35 L673.73 316.26 L675.42 316.14 L677.06 315.81 L678.68 315.34 L680.33 315.02 L682 313.94 L683.62 313.15 L685.24 314.44 L686.86 313.22 L688.48 313.04 L690.1 313.16 L691.72 314.56 L693.34 314.71 L694.96 314.71 L696.58 314.73 L698.2 314.72 L699.82 314.1 L701.44 313.34 L703.06 313.53 L704.68 314.39 L706.3 314.03 L707.92 313.65 L709.54 314.79 L711.16 314.01 L712.78 313.31 L714.4 314.8" stroke="#f0201c" stroke-width="1.2" fill="none" stroke-linejoin="round"/>
<path d="M522.32 100.91 L523.62 99.91 L524.63 98.49 L525.78 97.27 L527.73 97.22 L528.56 95.54 L530.45 95.4 L532.11 94.93 L532.27 92.77 L533.32 94.18 L533.31 96.38 L534.89 97.39 L536.66 98.27 L537.73 99.67 L538.77 101.08 L538.67 103.35 L539.96 104.58 L541.92 105.31 L542.07 107.5 L542.77 109.09 L544.58 109.72 L546.08 110.62 L546.92 112.09 L548.39 113.01 L549.5 114.25 L549.3 116.62 L551.09 117.26 L552.37 118.35 L552.64 120.31 L554.66 120.76 L554.95 122.68 L556.18 123.94 L558.19 124.55 L559.29 125.92 L560.38 127.3 L561.54 128.62 L562.27 130.3 L563.78 131.33 L564.74 132.77 L565.93 134.06 L565.67 136.31 L567.68 137.06 L568.51 138.59 L569.27 140.16 L569.51 142.08 L571.42 142.89 L571.38 144.99 L573.18 145.78 L573.77 147.32 L574.43 148.83 L575.52 150.16 L575.84 151.82 L576.74 153.22 L577.44 154.72 L577.02 156.69 L578.67 157.78 L578.99 159.44 L579.08 161.04 L579.87 162.5 L580.63 163.98 L580.76 165.61 L581.1 167.2 L580.97 168.9 L582.43 170.19 L582.32 171.89 L583.17 173.34 L583.55 174.91 L583.05 176.71 L584.04 178.04 L584.07 179.68 L583.74 181.36 L583.42 183.03 L584.69 184.57 L584.51 186.24 L584.86 187.86 L584.98 189.49 L584.73 191.16 L585.36 192.76 L585.35 194.41 L585.61 196.14 L585.09 198.13 L586.34 199.45 L586.45 201.2 L586.83 202.85 L588.8 203.91 L588.96 205.63 L588.57 207.56 L589.46 209.02 L591.2 210.17 L591.79 211.74 L592.06 213.39 L592.85 214.97 L593.22 216.67 L593.77 218.31 L593.46 220.19 L593.63 221.94 L593.76 223.7 L595.58 225 L595.19 226.91 L595.78 228.54 L596.97 230.02 L596.6 232.14 L597.17 233.74 L599.38 234.41 L598.85 236.62 L600.84 237.41 L601.54 238.94 L601.19 241.05 L602.46 242.25 L604.32 243.11 L604.89 244.71 L605.59 246.25 L606.72 247.58 L607.74 248.98 L608.54 250.51 L608.8 252.37 L610.5 253.35 L610.93 255.11 L612 256.47 L613.2 257.76 L613.93 259.33 L614.55 261.24 L616.02 262.18 L617.65 262.94 L617.86 265.39 L619.59 266.03 L620.54 267.59 L622.95 267.42 L624.21 268.62 L625.62 269.65 L626.24 271.6 L628.19 271.98 L629.58 273.02 L630.74 274.29 L631.36 276.26 L632.87 277.07 L634.88 277.25 L636.26 278.22 L636.69 280.43 L638.6 280.73 L639.76 282 L641.63 282.35 L642.97 283.38 L643.79 285.09 L645.45 285.71 L646.98 286.49 L647.35 288.78 L649.22 289.13 L650.39 290.58 L652.42 290.5 L653.16 292.49 L655.28 292.26 L656.01 294.28 L657.95 294.34 L659.46 295.09 L660.71 296.27 L661.61 298 L663.79 297.68 L665.27 298.48 L666.45 299.77 L668.09 300.32 L669.56 301.13 L670.98 302.04 L672.45 302.68 L673.88 303.41 L675.29 304.18 L676.75 304.84 L677.84 306.31 L679.66 306.17 L680.99 307.12 L682.61 307.43 L684 308.25 L685.55 308.73 L686.99 309.51 L688.69 309.56 L690.28 310.69 L692.01 310.43 L693.74 310.11 L695.4 310.62 L696.97 311.94 L698.81 310.56 L700.38 311.9 L702.16 311.2 L703.83 311.46 L705.44 312.44 L707.22 311.63 L708.89 311.97 L710.54 312.52 L712.15 313.57 L714 312" stroke="#f0201c" stroke-width="1.2" fill="none" stroke-linejoin="round"/>
<path d="M718 306 L728 283 L765 308 L838 234 A12.2 12.2 0 0 1 854.5 252 L782 328 L792 351 L840 402 L868 412 L885 425 L820 425 L769 363 L757 336Z" fill="#ec8cc0" fill-opacity="0.48" stroke="#f0201c" stroke-width="0.9"/>
<path d="M420.5 51V418" stroke="#a4a4bc" stroke-width="0.55"/>
<path d="M575 51V418" stroke="#a4a4bc" stroke-width="0.55"/>
<path d="M727.5 51V418" stroke="#a4a4bc" stroke-width="0.55"/>
<path d="M881 51V418" stroke="#a4a4bc" stroke-width="0.55"/>
<path d="M276 198.8H1023" stroke="#a4a4bc" stroke-width="0.55"/>
<path d="M505 45 L522 120 L560 200 L600 262 L689 314" stroke="#f08030" stroke-width="0.7" fill="none"/>
<path d="M529 265 C533 262 539 264 541 268 C543 272 547 275 546 280 C542 282 537 280 535 276 C532 272 527 269 529 265Z" fill="#f4f8fc"/><ellipse cx="539" cy="273" rx="2.2" ry="3.6" transform="rotate(-35 539 273)" fill="#cdc47a"/>
<path d="M944 324 L949 322 L951 326 L946 328Z" fill="#f4f8fc"/>
<path d="M574 120 L576 116 L577 121 L575 124Z" fill="#f4f8fc"/>
<rect x="562.5" y="155" width="10.5" height="9" fill="none" stroke="#2a6aa0" stroke-width="1.2"/><path d="M563 155 L567.7 151.5 L572.5 155" fill="none" stroke="#2a6aa0" stroke-width="1"/>
<path d="M581 183.5 L587 183.5 L582 191 L588 191Z" fill="none" stroke="#1a70b0" stroke-width="1.1"/>
<path d="M610 255 L615 260 L611 265" fill="none" stroke="#1a70b0" stroke-width="1.2"/><path d="M660 291 L668 294 L666 297" fill="none" stroke="#1a70b0" stroke-width="1"/>
<circle cx="690" cy="311" r="4" fill="none" stroke="#f8a060" stroke-width="0.6"/>
<circle cx="695" cy="309" r="3" fill="none" stroke="#f8a060" stroke-width="0.6"/>
<circle cx="700" cy="312" r="3.5" fill="none" stroke="#f8a060" stroke-width="0.6"/>
<circle cx="685" cy="313" r="3" fill="none" stroke="#f8a060" stroke-width="0.6"/>
<circle cx="640" cy="296" r="4" fill="none" stroke="#f8a060" stroke-width="0.6"/>
<circle cx="630" cy="290" r="3.5" fill="none" stroke="#f8a060" stroke-width="0.6"/>
<circle cx="620" cy="282" r="3.5" fill="none" stroke="#f8a060" stroke-width="0.6"/>
<circle cx="655" cy="302" r="3" fill="none" stroke="#f8a060" stroke-width="0.6"/>
<circle cx="700" cy="316" r="3" fill="none" stroke="#f8a060" stroke-width="0.6"/>
<circle cx="693" cy="312" r="5" fill="#f8b060" fill-opacity="0.6"/>
<path d="M684 306 C690 303 700 303 708 306" fill="none" stroke="#2a70a8" stroke-width="1"/>
<circle cx="506.6" cy="63.3" r="6" fill="none" stroke="#f0a080" stroke-width="0.6"/><circle cx="521" cy="122.5" r="6" fill="none" stroke="#f0a080" stroke-width="0.6"/>
<circle cx="682" cy="194" r="1.1" fill="none" stroke="#f02020" stroke-width="0.8"/>
<circle cx="683" cy="206" r="1.1" fill="none" stroke="#f02020" stroke-width="0.8"/>
<circle cx="700" cy="294" r="1.1" fill="none" stroke="#f02020" stroke-width="0.8"/>
<circle cx="702" cy="286" r="1.1" fill="none" stroke="#f02020" stroke-width="0.8"/>
<circle cx="698" cy="300" r="1.1" fill="none" stroke="#f02020" stroke-width="0.8"/>
<circle cx="712" cy="310" r="1.1" fill="none" stroke="#f02020" stroke-width="0.8"/>
</g></svg>
<div class="t" style="left:421.0px;top:54.99px;font-size:4.73px;transform:scaleX(0.91);transform-origin:0 0;color:#303030;">95 E</div>
<div class="t" style="left:574.5px;top:54.99px;font-size:4.73px;transform:scaleX(0.91);transform-origin:0 0;color:#303030;">100 E</div>
<div class="t" style="left:728.0px;top:54.99px;font-size:4.73px;transform:scaleX(0.91);transform-origin:0 0;color:#303030;">105 E</div>
<div class="t" style="left:882.0px;top:54.99px;font-size:4.73px;transform:scaleX(0.91);transform-origin:0 0;color:#303030;">110 E</div>
<div class="t" style="left:278.0px;top:202.99px;font-size:4.73px;transform:scaleX(0.91);transform-origin:0 0;color:#303030;">5 N</div>
<svg style="left:296px;top:57px" width="12" height="33" viewBox="0 0 12 33"><path d="M2 10L6 1.5L10 10Z" fill="#f29a30"/><path d="M6 10V31" stroke="#f08878" stroke-width="1.6"/><path d="M2.5 21V14.5L9.5 20.5V14" fill="none" stroke="#f29a30" stroke-width="1.2"/></svg>
<div class="a" style="left:974px;top:56.8px;width:16.4px;height:16.2px;background:#686c74;border-radius:1.5px"></div>
<div class="a" style="left:958.5px;top:73.3px;width:15.6px;height:16.2px;background:#686c74;border-radius:1.5px"></div>
<div class="a" style="left:974px;top:73.3px;width:16.4px;height:16.2px;background:#686c74;border-radius:1.5px"></div>
<div class="a" style="left:990.4px;top:73.3px;width:16px;height:16.2px;background:#686c74;border-radius:1.5px"></div>
<div class="a" style="left:974px;top:89.3px;width:16.4px;height:16.2px;background:#686c74;border-radius:1.5px"></div>
<div class="t" style="left:979.6px;top:63.47px;font-size:5.94px;transform:scaleX(0.91);transform-origin:0 0;color:#f0f0f0;font-weight:bold;">N</div>
<div class="t" style="left:963.2px;top:79.67px;font-size:5.94px;transform:scaleX(0.91);transform-origin:0 0;color:#f0f0f0;font-weight:bold;">W</div>
<div class="t" style="left:996.2px;top:79.67px;font-size:5.94px;transform:scaleX(0.91);transform-origin:0 0;color:#f0f0f0;font-weight:bold;">E</div>
<div class="t" style="left:980.0px;top:95.77px;font-size:5.94px;transform:scaleX(0.91);transform-origin:0 0;color:#f0f0f0;font-weight:bold;">S</div>
<svg style="left:976px;top:75px" width="12" height="12" viewBox="0 0 12 12"><circle cx="6" cy="6" r="3" fill="none" stroke="#f0f0f0" stroke-width="1"/><path d="M6 1.5v2M6 8.5v2M1.5 6h2M8.5 6h2" stroke="#f0f0f0" stroke-width="0.9"/></svg>
<div class="a" style="left:974px;top:120px;width:16.4px;height:15.5px;background:#686c74;border-radius:1.5px"></div>
<svg style="left:978px;top:124px" width="8" height="8"><path d="M4 2v4M2 4h4" stroke="#f0f0f0" stroke-width="0.9"/></svg>
<div class="a" style="left:974px;top:136px;width:16.4px;height:47.4px;background:#686c74;border-radius:1.5px"></div>
<div class="a" style="left:980.8px;top:139px;width:1.8px;height:42px;background:#9aa8b8;"></div>
<svg style="left:986px;top:140px" width="2" height="42"><path d="M1 0V42" stroke="#c8ccd0" stroke-width="1" stroke-dasharray="0.6 1.6"/></svg>
<div class="a" style="left:976.7px;top:168px;width:9.5px;height:4.6px;background:#e8e8e8;"></div>
<div class="a" style="left:974px;top:184px;width:16.4px;height:15.5px;background:#686c74;border-radius:1.5px"></div>
<div class="a" style="left:980.2px;top:192px;width:2.6px;height:0.9px;background:#f0f0f0;"></div>
<div class="a" style="left:974px;top:215px;width:16.4px;height:16.3px;background:#686c74;border-radius:1.5px"></div>
<svg style="left:977px;top:218px" width="11" height="11" viewBox="0 0 11 11"><path d="M2 9L9 2" stroke="#f4f4f4" stroke-width="1.6"/></svg>
<div class="a" style="left:276px;top:349.8px;width:747px;height:67.8px;background:rgba(0,0,0,0.5);border-top:1.4px solid rgba(0,0,0,0.25)"></div>
<svg style="left:283.7px;top:357.0px" width="9.0" height="9.0"><circle cx="4.5" cy="4.5" r="4.5" fill="#f4e000"/></svg>
<div class="t" style="left:299.2px;top:358.72px;font-size:6.82px;transform:scaleX(0.91);transform-origin:0 0;color:#ececec;">0 nm</div>
<svg style="left:329.0px;top:357.0px" width="9.0" height="9.0"><circle cx="4.5" cy="4.5" r="4.5" fill="#a86cf4"/></svg>
<div class="t" style="left:344.6px;top:358.72px;font-size:6.82px;transform:scaleX(0.91);transform-origin:0 0;color:#ececec;">4 nm</div>
<svg style="left:374.5px;top:357.0px" width="9.0" height="9.0"><circle cx="4.5" cy="4.5" r="4.5" fill="#a878f4"/></svg>
<div class="t" style="left:390.0px;top:358.72px;font-size:6.82px;transform:scaleX(0.91);transform-origin:0 0;color:#ececec;">6 nm</div>
<svg style="left:419.2px;top:357.0px" width="9.0" height="9.0"><circle cx="4.5" cy="4.5" r="4.5" fill="#b88cf4"/></svg>
<div class="t" style="left:436.0px;top:358.72px;font-size:6.82px;transform:scaleX(0.91);transform-origin:0 0;color:#ececec;">12 nm</div>
<svg style="left:465.3px;top:357.0px" width="9.0" height="9.0"><circle cx="4.5" cy="4.5" r="4.5" fill="#c6a8f6"/></svg>
<div class="t" style="left:480.0px;top:358.72px;font-size:6.82px;transform:scaleX(0.91);transform-origin:0 0;color:#ececec;">25 nm</div>
<svg style="left:510.5px;top:357.0px" width="9.0" height="9.0"><circle cx="4.5" cy="4.5" r="4.5" fill="#d8c8fa"/></svg>
<div class="t" style="left:525.5px;top:358.72px;font-size:6.82px;transform:scaleX(0.91);transform-origin:0 0;color:#ececec;">50 nm</div>
<svg style="left:556.0px;top:357.0px" width="9.0" height="9.0"><circle cx="4.5" cy="4.5" r="4.5" fill="#e4e0fc"/></svg>
<div class="t" style="left:571.0px;top:358.72px;font-size:6.82px;transform:scaleX(0.91);transform-origin:0 0;color:#ececec;">200 nm</div>
<svg style="left:598.5px;top:359.5px" width="6" height="4"><path d="M0.5 3.5L3 1L5.5 3.5" fill="none" stroke="#d8d8d8" stroke-width="0.8"/></svg>
<div class="t" style="left:285.1px;top:380.52px;font-size:6.82px;transform:scaleX(0.91);transform-origin:0 0;color:#ececec;">All Areas</div>
<div class="a" style="left:314.7px;top:377px;width:24px;height:11.6px;background:#5c9a5c;border-radius:5.8px"></div>
<svg style="left:330.09999999999997px;top:379.2px" width="7.2" height="7.2"><circle cx="3.6" cy="3.6" r="3.6" fill="#080808"/></svg>
<svg style="left:345.0px;top:378.3px" width="9.0" height="9.0"><circle cx="4.5" cy="4.5" r="4.5" fill="#f0962c"/></svg>
<div class="t" style="left:356.9px;top:380.52px;font-size:6.82px;transform:scaleX(0.91);transform-origin:0 0;color:#ececec;">ECA</div>
<svg style="left:378.7px;top:381px" width="6" height="4"><path d="M0.5 3.5L3 1L5.5 3.5" fill="none" stroke="#d8d8d8" stroke-width="0.8"/></svg>
<svg style="left:390.0px;top:378.3px" width="9.0" height="9.0"><circle cx="4.5" cy="4.5" r="4.5" fill="#226a26"/></svg>
<div class="t" style="left:401.0px;top:380.52px;font-size:6.82px;transform:scaleX(0.91);transform-origin:0 0;color:#ececec;">SA</div>
<svg style="left:424px;top:381px" width="6" height="4"><path d="M0.5 3.5L3 1L5.5 3.5" fill="none" stroke="#d8d8d8" stroke-width="0.8"/></svg>
<svg style="left:435.0px;top:378.3px" width="9.0" height="9.0"><circle cx="4.5" cy="4.5" r="4.5" fill="#1eb02a"/></svg>
<div class="t" style="left:447.0px;top:380.52px;font-size:6.82px;transform:scaleX(0.91);transform-origin:0 0;color:#ececec;">PSSA</div>
<svg style="left:469.5px;top:381px" width="6" height="4"><path d="M0.5 3.5L3 1L5.5 3.5" fill="none" stroke="#d8d8d8" stroke-width="0.8"/></svg>
<svg style="left:480.1px;top:378.3px" width="9.0" height="9.0"><circle cx="4.5" cy="4.5" r="4.5" fill="#20c8d8"/></svg>
<div class="t" style="left:492.0px;top:380.52px;font-size:6.82px;transform:scaleX(0.91);transform-origin:0 0;color:#ececec;">Polar</div>
<svg style="left:514px;top:381px" width="6" height="4"><path d="M0.5 3.5L3 1L5.5 3.5" fill="none" stroke="#d8d8d8" stroke-width="0.8"/></svg>
<svg style="left:525.5px;top:378.3px" width="9.0" height="9.0"><circle cx="4.5" cy="4.5" r="4.5" fill="#1464e4"/></svg>
<div class="t" style="left:538.0px;top:380.52px;font-size:6.82px;transform:scaleX(0.91);transform-origin:0 0;color:#ececec;">Region</div>
<svg style="left:559.5px;top:381px" width="6" height="4"><path d="M0.5 3.5L3 1L5.5 3.5" fill="none" stroke="#d8d8d8" stroke-width="0.8"/></svg>
<svg style="left:571.5px;top:378.3px" width="9.0" height="9.0"><circle cx="4.5" cy="4.5" r="4.5" fill="#ec2020"/></svg>
<div class="t" style="left:583.0px;top:380.52px;font-size:6.82px;transform:scaleX(0.91);transform-origin:0 0;color:#ececec;">Nat</div>
<svg style="left:604.5px;top:381px" width="6" height="4"><path d="M0.5 3.5L3 1L5.5 3.5" fill="none" stroke="#d8d8d8" stroke-width="0.8"/></svg>
<svg style="left:617.0px;top:378.3px" width="9.0" height="9.0"><circle cx="4.5" cy="4.5" r="4.5" fill="#1a74b8"/></svg>
<div class="t" style="left:628.0px;top:380.52px;font-size:6.82px;transform:scaleX(0.91);transform-origin:0 0;color:#ececec;">Port</div>
<svg style="left:650.5px;top:381px" width="6" height="4"><path d="M0.5 3.5L3 1L5.5 3.5" fill="none" stroke="#d8d8d8" stroke-width="0.8"/></svg>
<svg style="left:662.0px;top:378.3px" width="9.0" height="9.0"><circle cx="4.5" cy="4.5" r="4.5" fill="#8c4c20"/></svg>
<div class="t" style="left:674.0px;top:380.52px;font-size:6.82px;transform:scaleX(0.91);transform-origin:0 0;color:#ececec;">BWEA</div>
<svg style="left:696px;top:381px" width="6" height="4"><path d="M0.5 3.5L3 1L5.5 3.5" fill="none" stroke="#d8d8d8" stroke-width="0.8"/></svg>
<svg style="left:707.5px;top:378.3px" width="9.0" height="9.0"><circle cx="4.5" cy="4.5" r="4.5" fill="#d424c0"/></svg>
<div class="t" style="left:719.0px;top:380.52px;font-size:6.82px;transform:scaleX(0.91);transform-origin:0 0;color:#ececec;">Whale</div>
<svg style="left:741.5px;top:381px" width="6" height="4"><path d="M0.5 3.5L3 1L5.5 3.5" fill="none" stroke="#d8d8d8" stroke-width="0.8"/></svg>
<svg style="left:753.0px;top:378.3px" width="9.0" height="9.0"><circle cx="4.5" cy="4.5" r="4.5" fill="#8c8c8c"/></svg>
<div class="t" style="left:764.0px;top:380.52px;font-size:6.82px;transform:scaleX(0.91);transform-origin:0 0;color:#ececec;">Co.</div>
<svg style="left:786.5px;top:381px" width="6" height="4"><path d="M0.5 3.5L3 1L5.5 3.5" fill="none" stroke="#d8d8d8" stroke-width="0.8"/></svg>
<svg style="left:279.5px;top:398px" width="11" height="11"><circle cx="5.5" cy="5.5" r="5.3" fill="#f4f4f4"/><rect x="4.8" y="4.6" width="1.5" height="4" fill="#555"/><circle cx="5.5" cy="3" r="0.8" fill="#555"/></svg>
<div class="t" style="left:292.9px;top:396.72px;font-size:6.82px;transform:scaleX(0.91);transform-origin:0 0;color:#ececec;">03° 44.228' N, 102° 51.086' E | Roaming | Standard Display + Other (filtered)</div>
<div class="t" style="left:295.0px;top:405.12px;font-size:6.82px;transform:scaleX(0.91);transform-origin:0 0;color:#ececec;">Compilation Scale: 1:1&nbsp; | Display Scale: 1:7,000,000&nbsp; | Overscale: N/A</div>
<div class="t" style="left:882.0px;top:400.72px;font-size:6.82px;transform:scaleX(0.91);transform-origin:0 0;color:#ececec;">Display</div>
<svg style="left:903.5px;top:402.5px" width="6" height="4"><path d="M0.5 3.5L3 1L5.5 3.5" fill="none" stroke="#d8d8d8" stroke-width="0.8"/></svg>
<div class="t" style="left:916.5px;top:400.91px;font-size:6.6px;transform:scaleX(0.91);transform-origin:0 0;color:#b8b4a4;"><s>ENC</s></div>
<div class="t" style="left:934.8px;top:400.91px;font-size:6.6px;transform:scaleX(0.91);transform-origin:0 0;color:#8a8672;">AIO</div>
<svg style="left:952px;top:398.5px" width="9" height="10"><ellipse cx="4.5" cy="3" rx="2.5" ry="2.3" fill="#c8c4b0"/><path d="M0.8 5.5L8.2 9.5M8.2 5.5L0.8 9.5" stroke="#c8c4b0" stroke-width="1"/></svg>
<svg style="left:965.5px;top:398.5px" width="10" height="10"><path d="M5 1L9.5 9.3H0.5Z" fill="none" stroke="#c8c4b0" stroke-width="0.9"/><path d="M5 4v3" stroke="#c8c4b0" stroke-width="0.8"/></svg>
<svg style="left:979.5px;top:398.5px" width="9" height="10"><path d="M4.5 1V9.3M2.5 3H6.5M0.8 6C1.5 8.2 3 9.3 4.5 9.3C6 9.3 7.5 8.2 8.2 6" fill="none" stroke="#c8c4b0" stroke-width="0.9"/></svg>
<svg style="left:992.5px;top:398.5px" width="11" height="10"><circle cx="4" cy="4" r="1.8" fill="none" stroke="#c8c4b0" stroke-width="0.8"/><path d="M3.5 8C2.2 8 2.2 6 3.6 6C4 4.2 7 4 7.6 5.6C9.4 5.2 10.6 6.4 10 8Z" fill="none" stroke="#c8c4b0" stroke-width="0.8"/></svg>
<div class="a" style="left:1006.6px;top:398.8px;width:10.2px;height:10.2px;background:#f4f4f4"></div>
<div class="t" style="left:1007.6px;top:401.81px;font-size:5.06px;transform:scaleX(0.91);transform-origin:0 0;color:#444;font-weight:bold;">EM</div>
<div class="a" style="left:276px;top:417.6px;width:748px;height:1.4px;background:#1e1e1e;"></div>
<div class="a" style="left:1023px;top:51px;width:1px;height:367px;background:#2a2a2a;"></div>
<div class="a" style="left:276px;top:418px;width:748px;height:136px;background:#232323;"></div>
<div class="a" style="left:276px;top:419.7px;width:115.5px;height:13px;border:1px solid #4a4a4a;border-bottom:none;background:#232323"></div>
<div class="t" style="left:282.0px;top:423.83px;font-size:6.93px;transform:scaleX(0.91);transform-origin:0 0;color:#e8e8e8;">Draft Waypoints (SGSIN to MMRGN)</div>
<div class="a" style="left:391px;top:432px;width:633px;height:0.8px;background:#4a4a4a;"></div>
<div class="a" style="left:276px;top:432px;width:1px;height:91px;background:#4a4a4a;"></div>
<div class="a" style="left:277px;top:432.8px;width:741px;height:90px;background:#232323;"></div>
<div class="a" style="left:277px;top:443.3px;width:740px;height:0.8px;background:#404040;"></div>
<div class="a" style="left:277px;top:479.8px;width:741px;height:0.8px;background:#404040;"></div>
<div class="a" style="left:277px;top:492.8px;width:741px;height:0.8px;background:#404040;"></div>
<div class="a" style="left:277px;top:505.2px;width:741px;height:0.8px;background:#404040;"></div>
<div class="a" style="left:277px;top:517.2px;width:741px;height:0.8px;background:#404040;"></div>
<div class="a" style="left:284.2px;top:443.3px;width:0.8px;height:74px;background:#404040;"></div>
<div class="a" style="left:382.1px;top:443.3px;width:0.8px;height:74px;background:#404040;"></div>
<div class="a" style="left:429.7px;top:443.3px;width:0.8px;height:74px;background:#404040;"></div>
<div class="a" style="left:477.8px;top:443.3px;width:0.8px;height:74px;background:#404040;"></div>
<div class="a" style="left:521.2px;top:443.3px;width:0.8px;height:74px;background:#404040;"></div>
<div class="a" style="left:563.2px;top:443.3px;width:0.8px;height:74px;background:#404040;"></div>
<div class="a" style="left:606.1px;top:443.3px;width:0.8px;height:74px;background:#404040;"></div>
<div class="a" style="left:658.9px;top:443.3px;width:0.8px;height:74px;background:#404040;"></div>
<div class="a" style="left:712.5px;top:443.3px;width:0.8px;height:74px;background:#404040;"></div>
<div class="a" style="left:765.8px;top:443.3px;width:0.8px;height:74px;background:#404040;"></div>
<div class="a" style="left:819.2px;top:443.3px;width:0.8px;height:74px;background:#404040;"></div>
<div class="a" style="left:861.9px;top:443.3px;width:0.8px;height:74px;background:#404040;"></div>
<div class="a" style="left:904.9px;top:443.3px;width:0.8px;height:74px;background:#404040;"></div>
<div class="a" style="left:947.8px;top:443.3px;width:0.8px;height:74px;background:#404040;"></div>
<div class="a" style="left:990.1px;top:443.3px;width:0.8px;height:74px;background:#404040;"></div>
<div class="a" style="left:948.6px;top:432.8px;width:0.8px;height:11px;background:#404040;"></div>
<div class="a" style="left:284.7px;top:432.8px;width:0.8px;height:85px;background:#404040;"></div>
<div class="a" style="left:328px;top:432.8px;width:1.6px;height:90px;background:#4a4a4a;"></div>
<div class="a" style="left:1017px;top:432.8px;width:0.8px;height:91px;background:#404040;"></div>
<div class="a" style="left:285.5px;top:480.6px;width:42.5px;height:12.2px;background:#3c4855;"></div>
<div class="a" style="left:329.6px;top:480.6px;width:687.4px;height:12.2px;background:#56687a;"></div>
<svg style="left:278.5px;top:484.5px" width="4" height="5"><path d="M0.5 0.5L3 2.3L0.5 4.2z" fill="#d8d8d8"/></svg>
<div class="a" style="left:1017.8px;top:432.8px;width:5px;height:91px;background:#1c1c1c;"></div>
<div class="a" style="left:1018.2px;top:481px;width:3.4px;height:13px;background:#5d6e80;border-radius:2px"></div>
<div class="a" style="left:329px;top:518.2px;width:688px;height:5.5px;background:#282828;"></div>
<div class="a" style="left:329.5px;top:519px;width:237.5px;height:3.8px;background:#5a6b7d;border-radius:2px"></div>
<div class="t" style="left:627.8px;top:435.93px;font-size:6.93px;transform:scaleX(0.91);transform-origin:0 0;color:#dcdcdc;">General</div>
<div class="t" style="left:287.3px;top:455.53px;font-size:6.93px;transform:scaleX(0.91);transform-origin:0 0;color:#dcdcdc;">Waypoint</div>
<div class="t" style="left:287.3px;top:464.13px;font-size:6.93px;transform:scaleX(0.91);transform-origin:0 0;color:#dcdcdc;">No.</div>
<div class="t" style="left:331.3px;top:459.83px;font-size:6.93px;transform:scaleX(0.91);transform-origin:0 0;color:#dcdcdc;">Name</div>
<div class="t" style="left:384.8px;top:459.83px;font-size:6.93px;transform:scaleX(0.91);transform-origin:0 0;color:#dcdcdc;">Latitude</div>
<div class="t" style="left:433.0px;top:459.83px;font-size:6.93px;transform:scaleX(0.91);transform-origin:0 0;color:#dcdcdc;">Longitude</div>
<div class="t" style="left:480.7px;top:460.23px;font-size:6.93px;transform:scaleX(0.91);transform-origin:0 0;color:#dcdcdc;">Bearing (°)</div>
<div class="t" style="left:523.7px;top:447.13px;font-size:6.93px;transform:scaleX(0.91);transform-origin:0 0;color:#dcdcdc;">Overall</div>
<div class="t" style="left:523.7px;top:455.73px;font-size:6.93px;transform:scaleX(0.91);transform-origin:0 0;color:#dcdcdc;">Distance</div>
<div class="t" style="left:523.7px;top:464.33px;font-size:6.93px;transform:scaleX(0.91);transform-origin:0 0;color:#dcdcdc;">Travelled</div>
<div class="t" style="left:523.7px;top:472.93px;font-size:6.93px;transform:scaleX(0.91);transform-origin:0 0;color:#dcdcdc;">(NM)</div>
<div class="t" style="left:566.0px;top:455.93px;font-size:6.93px;transform:scaleX(0.91);transform-origin:0 0;color:#dcdcdc;">Distance</div>
<div class="t" style="left:566.0px;top:464.53px;font-size:6.93px;transform:scaleX(0.91);transform-origin:0 0;color:#dcdcdc;">(NM)</div>
<div class="t" style="left:609.0px;top:452.53px;font-size:6.93px;transform:scaleX(0.91);transform-origin:0 0;color:#dcdcdc;">Arrival Time</div>
<div class="t" style="left:609.0px;top:461.13px;font-size:6.93px;transform:scaleX(0.91);transform-origin:0 0;color:#dcdcdc;">(UTC)</div>
<div class="t" style="left:609.0px;top:469.81px;font-size:5.06px;transform:scaleX(0.91);transform-origin:0 0;color:#dcdcdc;">DD-MM-YYYY</div>
<div class="t" style="left:662.3px;top:452.53px;font-size:6.93px;transform:scaleX(0.91);transform-origin:0 0;color:#dcdcdc;">Arrival Time</div>
<div class="t" style="left:662.3px;top:461.13px;font-size:6.93px;transform:scaleX(0.91);transform-origin:0 0;color:#dcdcdc;">(Local)</div>
<div class="t" style="left:662.3px;top:469.81px;font-size:5.06px;transform:scaleX(0.91);transform-origin:0 0;color:#dcdcdc;">DD-MM-YYYY</div>
<div class="t" style="left:715.7px;top:452.53px;font-size:6.93px;transform:scaleX(0.91);transform-origin:0 0;color:#dcdcdc;">Demanded Time</div>
<div class="t" style="left:715.7px;top:461.13px;font-size:6.93px;transform:scaleX(0.91);transform-origin:0 0;color:#dcdcdc;">(Local)</div>
<div class="t" style="left:715.7px;top:469.81px;font-size:5.06px;transform:scaleX(0.91);transform-origin:0 0;color:#dcdcdc;">DD-MM-YYYY</div>
<div class="t" style="left:768.8px;top:460.23px;font-size:6.93px;transform:scaleX(0.91);transform-origin:0 0;color:#dcdcdc;">UTC Offset (+/-)</div>
<div class="t" style="left:822.0px;top:447.13px;font-size:6.93px;transform:scaleX(0.91);transform-origin:0 0;color:#dcdcdc;">Overall</div>
<div class="t" style="left:822.0px;top:455.73px;font-size:6.93px;transform:scaleX(0.91);transform-origin:0 0;color:#dcdcdc;">Distance</div>
<div class="t" style="left:822.0px;top:464.33px;font-size:6.93px;transform:scaleX(0.91);transform-origin:0 0;color:#dcdcdc;">Remaining</div>
<div class="t" style="left:822.0px;top:472.93px;font-size:6.93px;transform:scaleX(0.91);transform-origin:0 0;color:#dcdcdc;">(NM)</div>
<div class="t" style="left:865.0px;top:455.13px;font-size:6.93px;transform:scaleX(0.91);transform-origin:0 0;color:#dcdcdc;">Turn Radius</div>
<div class="t" style="left:865.0px;top:463.73px;font-size:6.93px;transform:scaleX(0.91);transform-origin:0 0;color:#dcdcdc;">(NM)</div>
<div class="t" style="left:907.6px;top:455.13px;font-size:6.93px;transform:scaleX(0.91);transform-origin:0 0;color:#dcdcdc;">Rate Of Turn</div>
<div class="t" style="left:907.6px;top:463.73px;font-size:6.93px;transform:scaleX(0.91);transform-origin:0 0;color:#dcdcdc;">(°/min)</div>
<div class="t" style="left:950.3px;top:459.53px;font-size:6.93px;transform:scaleX(0.91);transform-origin:0 0;color:#dcdcdc;">Speed (kts)</div>
<div class="a" style="left:993px;top:454px;width:24px;height:18px;overflow:hidden">
<div class="t" style="left:0.0px;top:1.13px;font-size:6.93px;transform:scaleX(0.91);transform-origin:0 0;color:#dcdcdc;">Type (GC</div>
<div class="t" style="left:0.0px;top:9.83px;font-size:6.93px;transform:scaleX(0.91);transform-origin:0 0;color:#dcdcdc;">\RL)</div>
</div>
<div class="t" style="right:698.5px;top:484.43px;font-size:6.93px;transform:scaleX(0.91);transform-origin:100% 0;color:#e8e8e8;">1</div>
<div class="t" style="left:331.3px;top:484.43px;font-size:6.93px;transform:scaleX(0.91);transform-origin:0 0;color:#e8e8e8;">WP 1</div>
<div class="t" style="right:596.5px;top:484.43px;font-size:6.93px;transform:scaleX(0.91);transform-origin:100% 0;color:#e8e8e8;">01° 16.067' N</div>
<div class="t" style="left:436.0px;top:484.43px;font-size:6.93px;transform:scaleX(0.91);transform-origin:0 0;color:#e8e8e8;">103° 50.150' E</div>
<div class="t" style="right:505.2px;top:484.43px;font-size:6.93px;transform:scaleX(0.91);transform-origin:100% 0;color:#e8e8e8;">159.84</div>
<div class="t" style="right:462.8px;top:484.43px;font-size:6.93px;transform:scaleX(0.91);transform-origin:100% 0;color:#e8e8e8;">0.00</div>
<div class="t" style="right:419.8px;top:484.43px;font-size:6.93px;transform:scaleX(0.91);transform-origin:100% 0;color:#e8e8e8;">0.12</div>
<div class="t" style="left:609.0px;top:484.43px;font-size:6.93px;transform:scaleX(0.91);transform-origin:0 0;color:#e8e8e8;">17:21 24-09-20...</div>
<div class="t" style="left:662.3px;top:484.43px;font-size:6.93px;transform:scaleX(0.91);transform-origin:0 0;color:#e8e8e8;">17:21 24-09-20...</div>
<div class="t" style="left:768.8px;top:484.43px;font-size:6.93px;transform:scaleX(0.91);transform-origin:0 0;color:#e8e8e8;">00:00</div>
<div class="t" style="right:163.8px;top:484.43px;font-size:6.93px;transform:scaleX(0.91);transform-origin:100% 0;color:#e8e8e8;">1103.99</div>
<div class="t" style="right:121.1px;top:484.43px;font-size:6.93px;transform:scaleX(0.91);transform-origin:100% 0;color:#e8e8e8;">1.50</div>
<div class="t" style="right:78.4px;top:484.43px;font-size:6.93px;transform:scaleX(0.91);transform-origin:100% 0;color:#e8e8e8;">8.28</div>
<div class="t" style="right:35.9px;top:484.43px;font-size:6.93px;transform:scaleX(0.91);transform-origin:100% 0;color:#e8e8e8;">0.00</div>
<div class="t" style="left:993.0px;top:484.43px;font-size:6.93px;transform:scaleX(0.91);transform-origin:0 0;color:#e8e8e8;">RL</div>
<div class="t" style="right:698.5px;top:496.73px;font-size:6.93px;transform:scaleX(0.91);transform-origin:100% 0;color:#e8e8e8;">2</div>
<div class="t" style="left:331.3px;top:496.73px;font-size:6.93px;transform:scaleX(0.91);transform-origin:0 0;color:#e8e8e8;">WP 2</div>
<div class="t" style="right:596.5px;top:496.73px;font-size:6.93px;transform:scaleX(0.91);transform-origin:100% 0;color:#e8e8e8;">01° 15.949' N</div>
<div class="t" style="left:436.0px;top:496.73px;font-size:6.93px;transform:scaleX(0.91);transform-origin:0 0;color:#e8e8e8;">103° 50.193' E</div>
<div class="t" style="right:505.2px;top:496.73px;font-size:6.93px;transform:scaleX(0.91);transform-origin:100% 0;color:#e8e8e8;">126.49</div>
<div class="t" style="right:462.8px;top:496.73px;font-size:6.93px;transform:scaleX(0.91);transform-origin:100% 0;color:#e8e8e8;">0.12</div>
<div class="t" style="right:419.8px;top:496.73px;font-size:6.93px;transform:scaleX(0.91);transform-origin:100% 0;color:#e8e8e8;">1.86</div>
<div class="t" style="left:609.0px;top:496.73px;font-size:6.93px;transform:scaleX(0.91);transform-origin:0 0;color:#e8e8e8;">17:22 24-09-20...</div>
<div class="t" style="left:662.3px;top:496.73px;font-size:6.93px;transform:scaleX(0.91);transform-origin:0 0;color:#e8e8e8;">17:22 24-09-20...</div>
<div class="t" style="left:768.8px;top:496.73px;font-size:6.93px;transform:scaleX(0.91);transform-origin:0 0;color:#e8e8e8;">00:00</div>
<div class="t" style="right:163.8px;top:496.73px;font-size:6.93px;transform:scaleX(0.91);transform-origin:100% 0;color:#e8e8e8;">1103.86</div>
<div class="t" style="right:121.1px;top:496.73px;font-size:6.93px;transform:scaleX(0.91);transform-origin:100% 0;color:#e8e8e8;">1.50</div>
<div class="t" style="right:78.4px;top:496.73px;font-size:6.93px;transform:scaleX(0.91);transform-origin:100% 0;color:#e8e8e8;">8.28</div>
<div class="t" style="right:35.9px;top:496.73px;font-size:6.93px;transform:scaleX(0.91);transform-origin:100% 0;color:#e8e8e8;">13.00</div>
<div class="t" style="left:993.0px;top:496.73px;font-size:6.93px;transform:scaleX(0.91);transform-origin:0 0;color:#e8e8e8;">RL</div>
<div class="t" style="right:698.5px;top:509.03px;font-size:6.93px;transform:scaleX(0.91);transform-origin:100% 0;color:#e8e8e8;">3</div>
<div class="t" style="left:331.3px;top:509.03px;font-size:6.93px;transform:scaleX(0.91);transform-origin:0 0;color:#e8e8e8;">WP 3</div>
<div class="t" style="right:596.5px;top:509.03px;font-size:6.93px;transform:scaleX(0.91);transform-origin:100% 0;color:#e8e8e8;">01° 14.845' N</div>
<div class="t" style="left:436.0px;top:509.03px;font-size:6.93px;transform:scaleX(0.91);transform-origin:0 0;color:#e8e8e8;">103° 51.686' E</div>
<div class="t" style="right:505.2px;top:509.03px;font-size:6.93px;transform:scaleX(0.91);transform-origin:100% 0;color:#e8e8e8;">141.94</div>
<div class="t" style="right:462.8px;top:509.03px;font-size:6.93px;transform:scaleX(0.91);transform-origin:100% 0;color:#e8e8e8;">1.98</div>
<div class="t" style="right:419.8px;top:509.03px;font-size:6.93px;transform:scaleX(0.91);transform-origin:100% 0;color:#e8e8e8;">1.13</div>
<div class="t" style="left:609.0px;top:509.03px;font-size:6.93px;transform:scaleX(0.91);transform-origin:0 0;color:#e8e8e8;">17:31 24-09-20...</div>
<div class="t" style="left:662.3px;top:509.03px;font-size:6.93px;transform:scaleX(0.91);transform-origin:0 0;color:#e8e8e8;">17:31 24-09-20...</div>
<div class="t" style="left:768.8px;top:509.03px;font-size:6.93px;transform:scaleX(0.91);transform-origin:0 0;color:#e8e8e8;">00:00</div>
<div class="t" style="right:163.8px;top:509.03px;font-size:6.93px;transform:scaleX(0.91);transform-origin:100% 0;color:#e8e8e8;">1102.01</div>
<div class="t" style="right:121.1px;top:509.03px;font-size:6.93px;transform:scaleX(0.91);transform-origin:100% 0;color:#e8e8e8;">1.50</div>
<div class="t" style="right:78.4px;top:509.03px;font-size:6.93px;transform:scaleX(0.91);transform-origin:100% 0;color:#e8e8e8;">8.28</div>
<div class="t" style="right:35.9px;top:509.03px;font-size:6.93px;transform:scaleX(0.91);transform-origin:100% 0;color:#e8e8e8;">13.00</div>
<div class="t" style="left:993.0px;top:509.03px;font-size:6.93px;transform:scaleX(0.91);transform-origin:0 0;color:#e8e8e8;">RL</div>
<div class="a" style="left:286.7px;top:526px;width:24.6px;height:24.5px;background:#57687a;border:1px solid #8d9aa8"></div>
<svg style="left:291px;top:531px" width="17" height="14" viewBox="0 0 17 14"><path d="M1 3V12.5H11V6.5" fill="none" stroke="#f0f2f4" stroke-width="1.6"/><rect x="3.5" y="8.5" width="5" height="3" fill="#f0f2f4"/><path d="M3.5 3V5.5H7" fill="none" stroke="#f0f2f4" stroke-width="1.3"/><path d="M8 3.5H13.5" stroke="#5cb85c" stroke-width="1.6"/><path d="M12.5 1.2L15.5 3.5L12.5 5.8z" fill="#5cb85c"/></svg>
<div class="a" style="left:321.7px;top:526px;width:80.1px;height:24.5px;background:#57687a;border:1px solid #8d9aa8"></div>
<svg style="left:330.5px;top:533.5px" width="10" height="10"><path d="M5 0.5V9.5M0.5 5H9.5" stroke="#f0f2f4" stroke-width="1.3"/></svg>
<div class="t" style="left:345.0px;top:535.92px;font-size:6.82px;transform:scaleX(0.91);transform-origin:0 0;color:#f0f2f4;font-weight:bold;">Create Waypoint</div>
<div class="a" style="left:412.3px;top:526px;width:80.5px;height:24.5px;background:#57687a;border:1px solid #8d9aa8"></div>
<svg style="left:428.5px;top:533px" width="8" height="10" viewBox="0 0 8 10"><path d="M5 0.3L1.2 5.2H3.8L2.6 9.7L6.8 4.2H4.2Z" fill="#f0f2f4"/></svg>
<div class="t" style="left:441.6px;top:535.92px;font-size:6.82px;transform:scaleX(0.91);transform-origin:0 0;color:#f0f2f4;font-weight:bold;">Create Event</div>
<div class="a" style="left:503.3px;top:526px;width:80.1px;height:24.5px;background:#57687a;border:1px solid #8d9aa8"></div>
<svg style="left:531px;top:533px" width="9" height="10" viewBox="0 0 9 10"><path d="M1 9L1.6 6.6L6.6 1.4L8.2 3L3.2 8.2Z" fill="#f0f2f4"/></svg>
<div class="t" style="left:545.0px;top:535.92px;font-size:6.82px;transform:scaleX(0.91);transform-origin:0 0;color:#f0f2f4;font-weight:bold;">Edit</div>
<div class="a" style="left:594.3px;top:526px;width:79.3px;height:24.5px;background:#57687a;border:1px solid #8d9aa8"></div>
<div class="t" style="left:613.5px;top:535.92px;font-size:6.82px;transform:scaleX(0.91);transform-origin:0 0;color:#f0f2f4;font-weight:bold;">Calculate UKC</div>
<div class="a" style="left:684.6px;top:526px;width:80.1px;height:24.5px;background:#c2c2c2;border:1px solid #d0d0d0"></div>
<div class="t" style="left:709.2px;top:535.92px;font-size:6.82px;transform:scaleX(0.91);transform-origin:0 0;color:#e8e8e8;">UKC Alerts</div>
<div class="t" style="left:778.0px;top:535.23px;font-size:6.93px;transform:scaleX(0.91);transform-origin:0 0;color:#e0e0e0;">Distance:</div>
<div class="t" style="left:809.0px;top:535.23px;font-size:6.93px;transform:scaleX(0.91);transform-origin:0 0;color:#e0e0e0;">1,103.99 nm</div>
<div class="t" style="left:859.3px;top:535.23px;font-size:6.93px;transform:scaleX(0.91);transform-origin:0 0;color:#e0e0e0;">Passage Time:</div>
<div class="t" style="left:903.5px;top:535.23px;font-size:6.93px;transform:scaleX(0.91);transform-origin:0 0;color:#e0e0e0;">3 days 14 hours 37 minutes</div>
<div class="a" style="left:276px;top:551px;width:748px;height:3px;background:#1c1c1c;"></div>
</body></html>
